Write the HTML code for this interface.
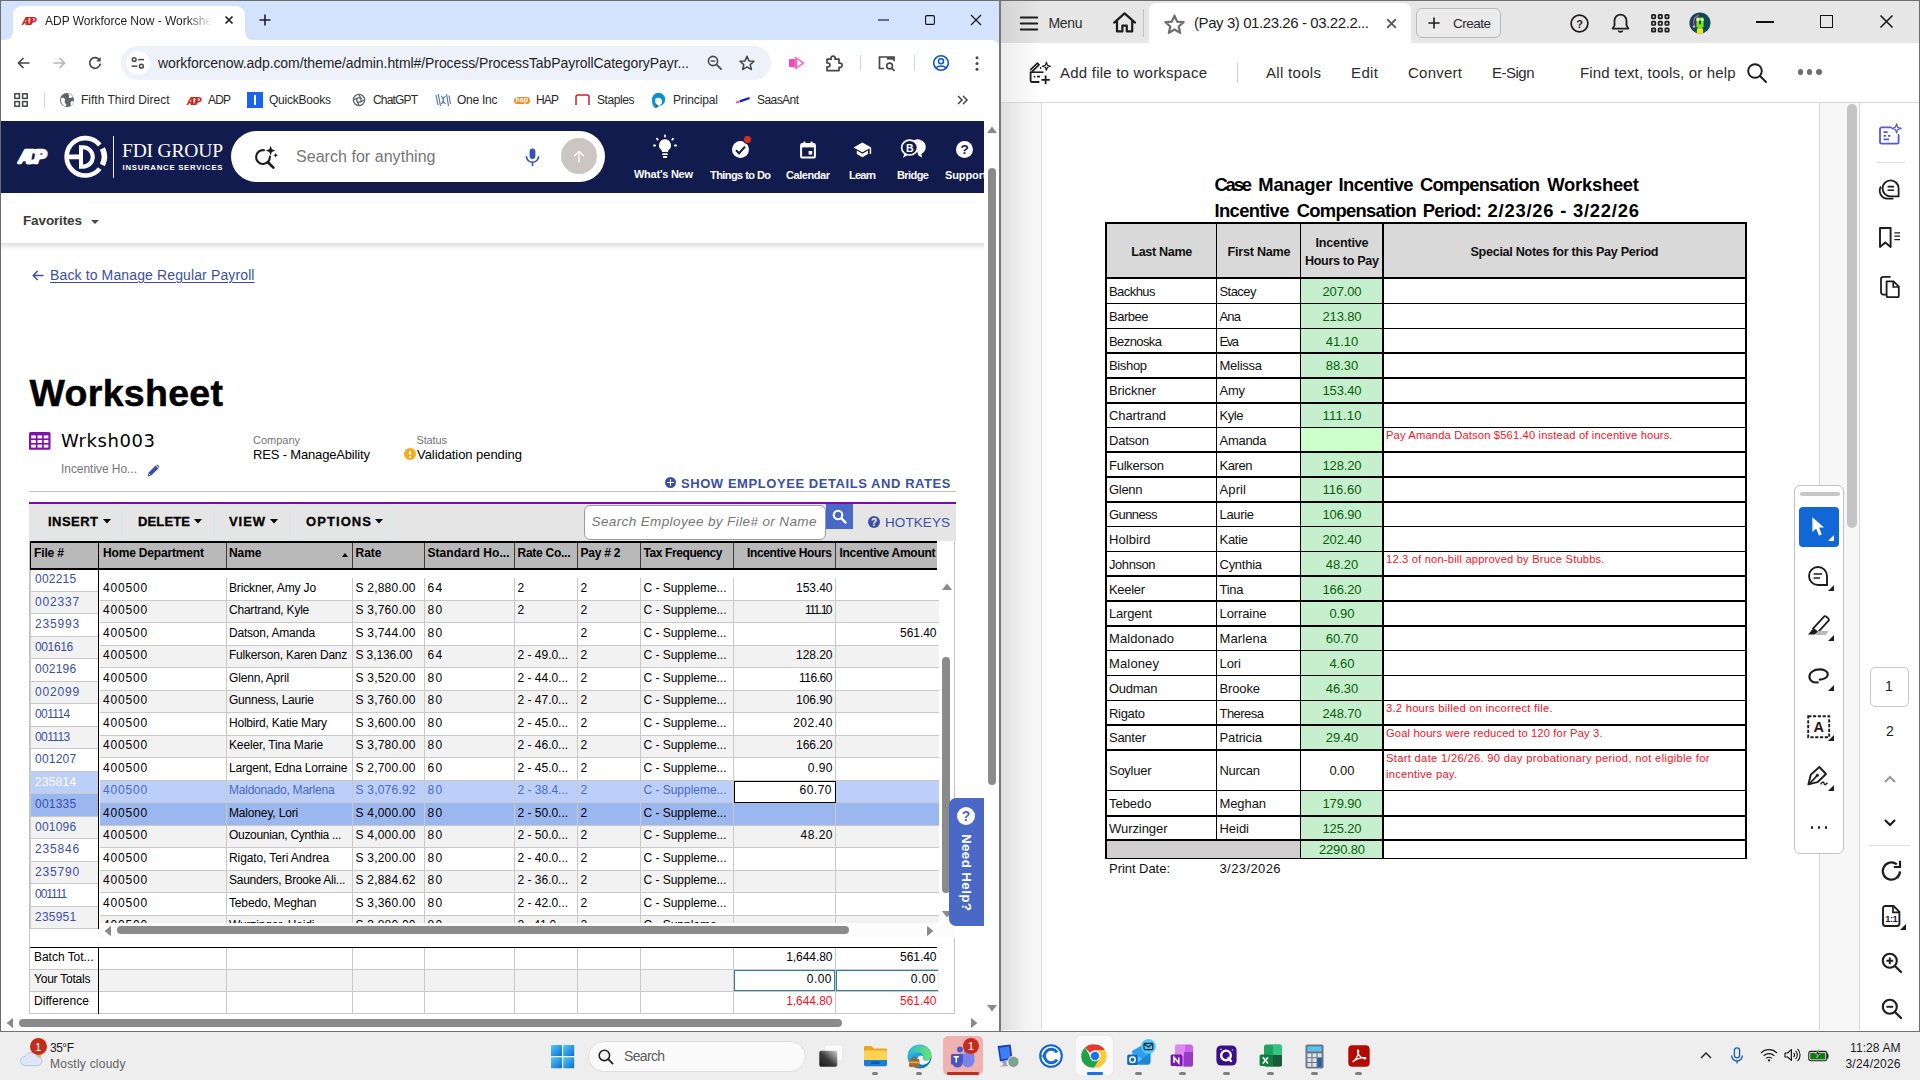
<!DOCTYPE html>
<html lang="en"><head><meta charset="utf-8"><title>ADP Workforce Now - Worksheet</title>
<style>
html,body{margin:0;padding:0;}
body{width:1920px;height:1080px;overflow:hidden;position:relative;background:#fff;font-family:"Liberation Sans",sans-serif;}
#root{position:absolute;left:0;top:0;width:1920px;height:1080px;overflow:hidden;}
#root div,#root svg,#root span.t{position:absolute;}
span.t{white-space:pre;}
svg{overflow:visible;}
</style></head>
<body><div id="root">
<!-- sec_chrome -->
<div style="left:1px;top:1px;width:998px;height:48px;background:#d3e3fd;"></div>
<div style="left:13px;top:6px;width:232px;height:34px;background:#fff;border-radius:9px 9px 0 0;"></div>
<svg style="left:5px;top:32px;" width="8" height="8" viewBox="0 0 8 8"><path d="M8 0V8H0A8 8 0 0 0 8 0Z" fill="#fff"/></svg>
<svg style="left:245px;top:32px;" width="8" height="8" viewBox="0 0 8 8"><path d="M0 0V8H8A8 8 0 0 1 0 0Z" fill="#fff"/></svg>
<div style="left:1px;top:40px;width:998px;height:81px;background:#fff;border-radius:0 7px 0 0;"></div>
<svg style="left:21px;top:15.6px;" width="16.5" height="9.2" viewBox="0 0 16.5 9.2"><text x="0.83" y="8.56" textLength="14.85" lengthAdjust="spacing" font-family="Liberation Sans, sans-serif" font-weight="700" font-style="italic" font-size="11.05" fill="#d0271d" stroke="#d0271d" stroke-width="0.18" stroke-linejoin="round">ADP</text></svg>
<span class="t" style="top:15.00px;font-size:12px;line-height:12px;color:#1f1f1f;letter-spacing:-0.015px;left:45.00px;-webkit-mask-image:linear-gradient(90deg,#000 85%,transparent 100%);mask-image:linear-gradient(90deg,#000 85%,transparent 100%);">ADP Workforce Now - Workshe</span>
<svg style="left:224px;top:15px;" width="10" height="10" viewBox="0 0 10 10"><path d="M1.5 1.5L8.5 8.5M8.5 1.5L1.5 8.5" stroke="#1f1f1f" stroke-width="1.7" fill="none"/></svg>
<svg style="left:259px;top:14px;" width="12" height="12" viewBox="0 0 12 12"><path d="M6 0.5V11.5M0.5 6H11.5" stroke="#1f1f1f" stroke-width="1.6" fill="none"/></svg>
<svg style="left:878px;top:14px;" width="12" height="12" viewBox="0 0 12 12"><path d="M0 6H11" stroke="#111" stroke-width="1.1"/></svg>
<svg style="left:925px;top:15px;" width="10" height="10" viewBox="0 0 10 10"><rect x="0.6" y="0.6" width="8.8" height="8.8" rx="1.2" fill="none" stroke="#111" stroke-width="1.1"/></svg>
<svg style="left:971px;top:15px;" width="10" height="10" viewBox="0 0 10 10"><path d="M0 0L10 10M10 0L0 10" stroke="#111" stroke-width="1.1"/></svg>
<svg style="left:17px;top:57px;" width="13" height="12" viewBox="0 0 13 12"><path d="M12.5 6H1.5M6.5 1L1.5 6L6.5 11" stroke="#444746" stroke-width="1.7" fill="none"/></svg>
<svg style="left:53px;top:57px;" width="13" height="12" viewBox="0 0 13 12"><path d="M0.5 6H11.5M6.5 1L11.5 6L6.5 11" stroke="#b4b7bb" stroke-width="1.7" fill="none"/></svg>
<svg style="left:88px;top:56px;" width="14" height="14" viewBox="0 0 14 14"><path d="M11.6 4.2A5.3 5.3 0 1 0 12.3 7.6" stroke="#444746" stroke-width="1.7" fill="none"/><path d="M12.6 1V5.4H8.2Z" fill="#444746"/></svg>
<div style="left:121px;top:46px;width:650px;height:34px;background:#edf1fa;border-radius:17px;"></div>
<div style="left:126px;top:51px;width:24px;height:24px;background:#fff;border-radius:12px;"></div>
<svg style="left:131px;top:57px;" width="14" height="12" viewBox="0 0 14 12"><circle cx="3.2" cy="2.6" r="1.9" fill="none" stroke="#444746" stroke-width="1.5"/><path d="M7.2 2.6H13" stroke="#444746" stroke-width="1.5"/><circle cx="10.4" cy="9.2" r="1.9" fill="none" stroke="#444746" stroke-width="1.5"/><path d="M0.6 9.2H6.4" stroke="#444746" stroke-width="1.5"/></svg>
<span class="t" style="top:56.00px;font-size:14px;line-height:14px;color:#1f1f1f;letter-spacing:-0.076px;left:158.00px;">workforcenow.adp.com/theme/admin.html#/Process/ProcessTabPayrollCategoryPayr...</span>
<svg style="left:707px;top:55px;" width="16" height="16" viewBox="0 0 16 16"><circle cx="6" cy="6" r="4.6" fill="none" stroke="#444746" stroke-width="1.6"/><path d="M9.4 9.4L14.6 14.6" stroke="#444746" stroke-width="1.8"/><path d="M3.8 6H8.2" stroke="#444746" stroke-width="1.4"/></svg>
<svg style="left:739px;top:55px;" width="16" height="16" viewBox="0 0 16 16"><path d="M8 1.3L10 5.9L15 6.3L11.2 9.6L12.4 14.5L8 11.9L3.6 14.5L4.8 9.6L1 6.3L6 5.9Z" fill="none" stroke="#444746" stroke-width="1.5" stroke-linejoin="round"/></svg>
<svg style="left:788px;top:56px;" width="18" height="14" viewBox="0 0 18 14"><rect x="1" y="3" width="8" height="8" fill="#f04bb5"/><path d="M7.5 1.5L15.5 7L7.5 12.5Z" fill="none" stroke="#f772c8" stroke-width="1.6" stroke-linejoin="round"/></svg>
<svg style="left:825px;top:54px;" width="18" height="18" viewBox="0 0 18 18"><path d="M2 5.2H6.1V4.1A2 2 0 0 1 10.1 4.1V5.2H14V9.2H15A2.1 2.1 0 0 1 15 13.4H14V16.6H2V12.8H3A1.9 1.9 0 0 0 3 9H2Z" fill="none" stroke="#444746" stroke-width="1.7" stroke-linejoin="round"/></svg>
<div style="left:859.5px;top:55px;width:1.5px;height:16px;background:#c7d6f5;"></div>
<svg style="left:878px;top:55px;" width="18" height="16" viewBox="0 0 18 16"><path d="M6 13.5H1.5V2H16V6" fill="none" stroke="#444746" stroke-width="1.7"/><path d="M9 2.2H16V4.6H9Z" fill="#444746"/><circle cx="11.6" cy="11" r="2.9" fill="none" stroke="#444746" stroke-width="1.6"/><path d="M13.8 13.2L16.6 16" stroke="#444746" stroke-width="1.7"/></svg>
<div style="left:913.5px;top:55px;width:1.5px;height:16px;background:#c7d6f5;"></div>
<svg style="left:932px;top:54px;" width="18" height="18" viewBox="0 0 18 18"><circle cx="9" cy="9" r="7.3" fill="none" stroke="#0b57d0" stroke-width="1.6"/><circle cx="9" cy="7.2" r="2.5" fill="none" stroke="#0b57d0" stroke-width="1.5"/><path d="M3.9 14A6.3 4.6 0 0 1 14.1 14" fill="none" stroke="#0b57d0" stroke-width="1.5"/></svg>
<svg style="left:975px;top:56px;" width="4" height="16" viewBox="0 0 4 16"><circle cx="2" cy="1.8" r="1.5" fill="#444746"/><circle cx="2" cy="7.5" r="1.5" fill="#444746"/><circle cx="2" cy="13.2" r="1.5" fill="#444746"/></svg>
<svg style="left:14px;top:93px;" width="14" height="14" viewBox="0 0 14 14"><g fill="none" stroke="#444746" stroke-width="1.5"><rect x="0.8" y="0.8" width="4.6" height="4.6"/><rect x="8.6" y="0.8" width="4.6" height="4.6"/><rect x="0.8" y="8.6" width="4.6" height="4.6"/><rect x="8.6" y="8.6" width="4.6" height="4.6"/></g></svg>
<div style="left:43.5px;top:92px;width:1.5px;height:16px;background:#c7d6f5;"></div>
<svg style="left:60px;top:93px;" width="14" height="14" viewBox="0 0 14 14"><circle cx="7" cy="7" r="7" fill="#5f6368"/><path d="M1.2 5.2C3 4.4 4.5 5 5 6.5C5.3 7.8 4.3 8.2 4.8 9.4C5.3 10.6 6.6 10.4 6.4 12C6.3 12.8 5.6 13.3 5 13.4A7 7 0 0 1 1.2 5.2ZM7.5 0.4C9 1.4 9.6 2.4 9 3.4C8.5 4.3 9.6 5 10.4 5C11.5 5 12 4 13 4A7 7 0 0 0 7.5 0.4ZM13.7 8.4C12.6 7.9 11.3 8 10.8 9C10.3 10 11 11 10.4 12.4C12 11.8 13.3 10.4 13.7 8.4Z" fill="#fff"/></svg>
<span class="t" style="top:94.00px;font-size:12px;line-height:12px;color:#2a2a2a;letter-spacing:0.002px;left:81.00px;">Fifth Third Direct</span>
<svg style="left:186px;top:95.6px;" width="16.5" height="9.2" viewBox="0 0 16.5 9.2"><text x="0.83" y="8.56" textLength="14.85" lengthAdjust="spacing" font-family="Liberation Sans, sans-serif" font-weight="700" font-style="italic" font-size="11.05" fill="#d0271d" stroke="#d0271d" stroke-width="0.18" stroke-linejoin="round">ADP</text></svg>
<span class="t" style="top:94.00px;font-size:12px;line-height:12px;color:#2a2a2a;letter-spacing:-0.844px;left:208.00px;">ADP</span>
<div style="left:247px;top:92px;width:16px;height:16px;background:#1a63ef;"></div>
<div style="left:253.6px;top:95px;width:2.8px;height:10px;background:#fff;"></div>
<span class="t" style="top:94.00px;font-size:12px;line-height:12px;color:#2a2a2a;letter-spacing:-0.226px;left:269.00px;">QuickBooks</span>
<svg style="left:352px;top:93px;" width="14" height="14" viewBox="0 0 14 14"><g fill="none" stroke="#5f6368" stroke-width="1.3"><circle cx="7" cy="7" r="5.6"/><circle cx="7" cy="7" r="2.3"/><path d="M7 1.4L9 5.8M12.6 7L8.4 9M7 12.6L5 8.2M1.4 7L5.6 5"/></g></svg>
<span class="t" style="top:94.00px;font-size:12px;line-height:12px;color:#2a2a2a;letter-spacing:-0.836px;left:373.00px;">ChatGPT</span>
<svg style="left:435px;top:93px;" width="16" height="14" viewBox="0 0 16 14"><g fill="none" stroke="#5a7fae" stroke-width="1.2"><path d="M1 2L3 12M3.2 1L5.5 13M6 3C9 5 9 9 6 11M10.5 3C7.5 5 7.5 9 10.5 11M11.5 1L13.5 13M14 2.5L15.5 11"/></g></svg>
<span class="t" style="top:94.00px;font-size:12px;line-height:12px;color:#2a2a2a;letter-spacing:-0.255px;left:457.00px;">One Inc</span>
<div style="left:514px;top:96.5px;width:16px;height:7.5px;background:#f28c28;border-radius:4px;"></div>
<span class="t" style="top:97.00px;font-size:6.5px;line-height:6.5px;color:#fff;font-weight:700;letter-spacing:0.469px;left:515.60px;">hap</span>
<span class="t" style="top:94.00px;font-size:12px;line-height:12px;color:#2a2a2a;letter-spacing:-0.844px;left:536.00px;">HAP</span>
<svg style="left:575px;top:94px;" width="16" height="12" viewBox="0 0 16 12"><path d="M1 11V2.6A1.6 1.6 0 0 1 2.6 1H12.4A1.6 1.6 0 0 1 14 2.6V11" fill="none" stroke="#cc1f2d" stroke-width="1.5"/></svg>
<span class="t" style="top:94.00px;font-size:12px;line-height:12px;color:#2a2a2a;letter-spacing:-0.422px;left:597.00px;">Staples</span>
<svg style="left:651px;top:92px;" width="15" height="17" viewBox="0 0 15 17"><path d="M7.6 0.8A6.6 6.6 0 0 1 14.2 7.4C14.2 11 11.4 13.6 8.4 13.8A4.2 4.2 0 0 0 11 9.8A4 4 0 0 0 7 5.8A4 4 0 0 0 4.2 7V16.2C2 14.6 0.9 11.4 0.9 7.6A6.7 6.7 0 0 1 7.6 0.8Z" fill="#0a91d4"/><path d="M4.2 10V16.2C5.6 15.8 7.4 14.6 8.4 13.8C6.2 13.6 4.6 12 4.2 10Z" fill="#035f9e"/></svg>
<span class="t" style="top:94.00px;font-size:12px;line-height:12px;color:#2a2a2a;letter-spacing:-0.129px;left:673.00px;">Principal</span>
<svg style="left:735px;top:96px;" width="16" height="8" viewBox="0 0 16 8"><path d="M1 6.6L4.5 5.6" stroke="#ee3fb8" stroke-width="1.8"/><path d="M4.8 5.4L14.6 2" stroke="#1a1fb8" stroke-width="2.2"/></svg>
<span class="t" style="top:94.00px;font-size:12px;line-height:12px;color:#2a2a2a;letter-spacing:-0.562px;left:757.00px;">SaasAnt</span>
<svg style="left:957px;top:95px;" width="11" height="10" viewBox="0 0 11 10"><path d="M1 1L5 5L1 9M6 1L10 5L6 9" fill="none" stroke="#444746" stroke-width="1.5"/></svg>
<!-- sec_adp -->
<div style="left:1px;top:121px;width:983px;height:72px;background:#121b4d;"></div>
<svg style="left:17px;top:148.6px;" width="31" height="15.2" viewBox="0 0 31 15.2"><text x="1.55" y="14.14" textLength="27.90" lengthAdjust="spacing" font-family="Liberation Sans, sans-serif" font-weight="700" font-style="italic" font-size="18.26" fill="#fff" stroke="#fff" stroke-width="2.28" stroke-linejoin="round">ADP</text></svg>
<svg style="left:64px;top:135px;" width="44" height="44" viewBox="0 0 44 44"><path d="M35.8 10A18.7 18.7 0 1 0 35.8 33.6" fill="none" stroke="#fff" stroke-width="4.6"/><path d="M38.4 13.6A18.4 18.4 0 0 1 38.4 30" fill="none" stroke="#fff" stroke-width="5.6"/><path d="M15 10.2H19A11.8 11.75 0 0 1 19 33.7H15V24.2H3.5V19.6H15Z M19 14.3V29.6A7.7 7.65 0 0 0 19 14.3Z" fill="#fff" fill-rule="evenodd"/></svg>
<div style="left:113px;top:136px;width:1.2px;height:42px;background:#e8e8ef;"></div>
<span class="t" style="top:141.00px;font-size:19.5px;line-height:19.5px;color:#fff;font-family:'Liberation Serif', serif;letter-spacing:-0.176px;left:122.00px;">FDI GROUP</span>
<span class="t" style="top:164.00px;font-size:7.8px;line-height:7.8px;color:#fff;font-weight:700;letter-spacing:0.717px;left:122.50px;">INSURANCE SERVICES</span>
<div style="left:231px;top:131px;width:374px;height:51px;background:#fff;border-radius:25.5px;"></div>
<svg style="left:255px;top:145px;" width="26" height="26" viewBox="0 0 26 26"><path d="M14.9 11.6A6.9 6.9 0 1 1 9 5.2" fill="none" stroke="#1c1c1c" stroke-width="2.1" stroke-linecap="round"/><path d="M13 17.2L18.4 22.6" stroke="#1c1c1c" stroke-width="2.7" stroke-linecap="round"/><path d="M15.6 0.8L16.9 4.3L20.4 5.6L16.9 6.9L15.6 10.4L14.3 6.9L10.8 5.6L14.3 4.3Z" fill="#1c1c1c"/><path d="M20.7 7.9L21.4 9.6L23.1 10.3L21.4 11L20.7 12.7L20 11L18.3 10.3L20 9.6Z" fill="#1c1c1c"/></svg>
<span class="t" style="top:149.00px;font-size:16px;line-height:16px;color:#767676;letter-spacing:0.042px;left:296.00px;">Search for anything</span>
<svg style="left:525px;top:148px;" width="16" height="19" viewBox="0 0 16 19"><rect x="4.6" y="0.6" width="5.8" height="10.4" rx="2.9" fill="#3553b5"/><path d="M1.4 8.2A6.1 6.1 0 0 0 13.6 8.2" fill="none" stroke="#3553b5" stroke-width="1.6"/><path d="M7.5 14.2V18" stroke="#3553b5" stroke-width="1.6"/></svg>
<div style="left:561px;top:138px;width:36px;height:36px;background:#cbc6c1;border-radius:18px;"></div>
<svg style="left:573px;top:150px;" width="12" height="13" viewBox="0 0 12 13"><path d="M6 12.5V1.5M1 6.3L6 1.3L11 6.3" fill="none" stroke="#fff" stroke-width="1.3"/></svg>
<svg style="left:652px;top:134px;" width="26" height="26" viewBox="0 0 26 26"><path d="M13 5.2A6 6 0 0 0 9.2 15.8C9.8 16.4 10 17 10 18H16C16 17 16.2 16.4 16.8 15.8A6 6 0 0 0 13 5.2Z" fill="#fff"/><rect x="10.2" y="19.2" width="5.6" height="1.9" rx="0.9" fill="#fff"/><rect x="10.8" y="22" width="4.4" height="1.9" rx="0.9" fill="#fff"/><g fill="#fff"><rect x="12.1" y="0.4" width="1.8" height="3" rx="0.9"/><rect x="4.4" y="3.6" width="1.8" height="3" rx="0.9" transform="rotate(-45 5.3 5.1)"/><rect x="19.8" y="3.6" width="1.8" height="3" rx="0.9" transform="rotate(45 20.7 5.1)"/><rect x="1" y="10.6" width="3" height="1.8" rx="0.9"/><rect x="22" y="10.6" width="3" height="1.8" rx="0.9"/></g></svg>
<span class="t" style="top:169.00px;font-size:11px;line-height:11px;color:#fff;font-weight:700;letter-spacing:-0.259px;left:363.37px;width:600px;text-align:center;">What’s New</span>
<div style="left:732px;top:141px;width:17px;height:17px;background:#fff;border-radius:9px;"></div>
<svg style="left:735px;top:144.5px;" width="11" height="10" viewBox="0 0 11 10"><path d="M1 5.2L4.1 8.2L10 1.6" fill="none" stroke="#121b4d" stroke-width="2"/></svg>
<div style="left:744px;top:135.5px;width:7px;height:7px;background:#d2341f;border-radius:4px;border:1px solid #121b4d;box-sizing:content-box;margin:-1px;"></div>
<span class="t" style="top:170.00px;font-size:11px;line-height:11px;color:#fff;font-weight:700;letter-spacing:-0.565px;left:440.22px;width:600px;text-align:center;">Things to Do</span>
<svg style="left:800px;top:141px;" width="16" height="18" viewBox="0 0 16 18"><rect x="1.1" y="3" width="13.8" height="13.6" rx="1.2" fill="none" stroke="#fff" stroke-width="2"/><rect x="1.1" y="3" width="13.8" height="3.4" fill="#fff"/><rect x="3.4" y="0.6" width="2" height="4" fill="#fff"/><rect x="10.6" y="0.6" width="2" height="4" fill="#fff"/><rect x="8.6" y="10" width="3.6" height="3.6" fill="#fff"/></svg>
<span class="t" style="top:170.00px;font-size:11px;line-height:11px;color:#fff;font-weight:700;letter-spacing:-0.440px;left:507.78px;width:600px;text-align:center;">Calendar</span>
<svg style="left:853px;top:142px;" width="20" height="16" viewBox="0 0 20 16"><path d="M9.4 0.6L0.6 5.4L9.4 10.2L18.2 5.4Z" fill="#fff"/><path d="M3.8 8.6V12L9.4 15.2L15 12V8.6L9.4 11.8Z" fill="#fff"/><path d="M17.4 6V12" stroke="#fff" stroke-width="1.5"/></svg>
<span class="t" style="top:170.00px;font-size:11px;line-height:11px;color:#fff;font-weight:700;letter-spacing:-0.742px;left:562.13px;width:600px;text-align:center;">Learn</span>
<svg style="left:900px;top:139px;" width="26" height="20" viewBox="0 0 26 20"><path d="M14 1.2A8 7.6 0 0 1 21.4 15L22 18.6L18.4 16.4" fill="#fff"/><ellipse cx="9.6" cy="8.6" rx="8" ry="7.4" fill="#121b4d" stroke="#fff" stroke-width="1.7"/><path d="M4.4 14.4L3 18.8L8 15.8Z" fill="#fff"/><text x="9.7" y="12.6" text-anchor="middle" font-family="Liberation Sans, sans-serif" font-weight="700" font-size="10.5" fill="#fff">B</text></svg>
<span class="t" style="top:170.00px;font-size:11px;line-height:11px;color:#fff;font-weight:700;letter-spacing:-0.569px;left:612.72px;width:600px;text-align:center;">Bridge</span>
<div style="left:956px;top:141px;width:17px;height:17px;background:#fff;border-radius:9px;"></div>
<span class="t" style="top:143.00px;font-size:13.5px;line-height:13.5px;color:#121b4d;font-weight:700;left:664.50px;width:600px;text-align:center;">?</span>
<div style="left:940px;top:160px;width:44px;height:26px;overflow:hidden;"><span class="t" style="top:10.00px;font-size:11px;line-height:11px;color:#fff;font-weight:700;letter-spacing:-0.112px;left:5.00px;">Support</span></div>
<div style="left:1px;top:243px;width:983px;height:8px;background:linear-gradient(180deg,rgba(0,0,0,0.13),rgba(0,0,0,0.03) 60%,rgba(0,0,0,0));"></div>
<span class="t" style="top:214.00px;font-size:13.5px;line-height:13.5px;color:#3a3a3a;font-weight:700;letter-spacing:-0.129px;left:23.00px;">Favorites</span>
<svg style="left:91px;top:219.5px;" width="8" height="4" viewBox="0 0 8 4"><path d="M0 0H8L4 4Z" fill="#4a4a4a"/></svg>
<div style="left:984px;top:121px;width:15px;height:909px;background:#fff;"></div>
<svg style="left:986.5px;top:125.5px;" width="10" height="7" viewBox="0 0 10 7"><path d="M0.3 6.4L5 0.6L9.7 6.4Q9.9 7 9.2 7H0.8Q0.1 7 0.3 6.4Z" fill="#8a8a8a"/></svg>
<div style="left:987.5px;top:168px;width:8px;height:617px;background:#8b8b8b;border-radius:4px;"></div>
<svg style="left:986.5px;top:1005px;" width="10" height="7" viewBox="0 0 10 7"><path d="M0.3 0.6L5 6.4L9.7 0.6Q9.9 0 9.2 0H0.8Q0.1 0 0.3 0.6Z" fill="#8a8a8a"/></svg>
<svg style="left:32px;top:270px;" width="12" height="11" viewBox="0 0 12 11"><path d="M11.5 5.5H1.2M5.6 1L1.2 5.5L5.6 10" fill="none" stroke="#3a4fa5" stroke-width="1.5"/></svg>
<span class="t" style="top:268.00px;font-size:14px;line-height:14px;color:#3a4fa5;letter-spacing:0.128px;left:50.00px;text-decoration:underline;text-underline-offset:2px;text-decoration-thickness:1px;">Back to Manage Regular Payroll</span>
<span class="t" style="top:375.00px;font-size:37.5px;line-height:37.5px;color:#000;font-weight:700;letter-spacing:0.307px;left:29.50px;-webkit-text-stroke:0.5px #000;">Worksheet</span>
<svg style="left:29px;top:432px;" width="22" height="18" viewBox="0 0 22 18"><rect x="0" y="0" width="21.5" height="17.8" rx="1.6" fill="#8212a6"/><g fill="#fff"><rect x="2.2" y="3.4" width="4.6" height="3"/><rect x="8.5" y="3.4" width="4.6" height="3"/><rect x="14.8" y="3.4" width="4.6" height="3"/><rect x="2.2" y="8" width="4.6" height="3"/><rect x="8.5" y="8" width="4.6" height="3"/><rect x="14.8" y="8" width="4.6" height="3"/><rect x="2.2" y="12.6" width="4.6" height="3"/><rect x="8.5" y="12.6" width="4.6" height="3"/><rect x="14.8" y="12.6" width="4.6" height="3"/></g></svg>
<span class="t" style="top:432.00px;font-size:18px;line-height:18px;color:#000;font-family:'DejaVu Sans', sans-serif;letter-spacing:0.576px;left:61.00px;">Wrksh003</span>
<span class="t" style="top:463.00px;font-size:12px;line-height:12px;color:#767676;letter-spacing:-0.051px;left:61.00px;">Incentive Ho...</span>
<svg style="left:146.5px;top:463.5px;" width="13" height="13" viewBox="0 0 13 13"><path d="M0.6 12.4L1.4 8.8L8.6 1.6L11.4 4.4L4.2 11.6Z" fill="#3a4fa5"/><path d="M9.4 0.9A1 1 0 0 1 10.8 0.9L12.1 2.2A1 1 0 0 1 12.1 3.6L11.9 3.8L9.2 1.1Z" fill="#3a4fa5"/><path d="M1.7 9.6L3.4 11.3" stroke="#fff" stroke-width="0.8"/></svg>
<span class="t" style="top:435.00px;font-size:11px;line-height:11px;color:#767676;letter-spacing:-0.013px;left:253.00px;">Company</span>
<span class="t" style="top:448.00px;font-size:13px;line-height:13px;color:#000;letter-spacing:-0.164px;left:253.00px;">RES - ManageAbility</span>
<span class="t" style="top:435.00px;font-size:11px;line-height:11px;color:#767676;letter-spacing:-0.138px;left:416.50px;">Status</span>
<div style="left:403.9px;top:448.2px;width:12px;height:12px;background:#f9ab1a;border-radius:6px;"></div>
<div style="left:409px;top:450.6px;width:1.8px;height:4.8px;background:#fff;"></div>
<div style="left:409px;top:456.4px;width:1.8px;height:1.8px;background:#fff;"></div>
<span class="t" style="top:448.00px;font-size:13px;line-height:13px;color:#000;letter-spacing:-0.060px;left:417.00px;">Validation pending</span>
<div style="left:665px;top:477px;width:11px;height:11px;background:#3a4fa5;border-radius:6px;"></div>
<div style="left:667.4px;top:481.7px;width:6.2px;height:1.6px;background:#fff;"></div>
<div style="left:669.7px;top:479.4px;width:1.6px;height:6.2px;background:#fff;"></div>
<span class="t" style="top:477.00px;font-size:13px;line-height:13px;color:#3a4fa5;font-weight:700;letter-spacing:0.565px;left:681.00px;">SHOW EMPLOYEE DETAILS AND RATES</span>
<!-- sec_grid -->
<div style="left:29px;top:491px;width:927px;height:1px;background:#c4c4c4;"></div>
<div style="left:29px;top:504px;width:927px;height:37px;background:#e5e5e5;"></div>
<div style="left:29px;top:502px;width:927px;height:2.4px;background:#7c0ca6;"></div>
<div style="left:33px;top:505px;width:89px;height:35px;background:transparent;border:1px solid #dbe6ea;box-sizing:border-box;"></div>
<div style="left:122px;top:505px;width:92px;height:35px;background:transparent;border:1px solid #dbe6ea;box-sizing:border-box;"></div>
<div style="left:214px;top:505px;width:76px;height:35px;background:transparent;border:1px solid #dbe6ea;box-sizing:border-box;"></div>
<div style="left:290px;top:505px;width:104px;height:35px;background:transparent;border:1px solid #dbe6ea;box-sizing:border-box;"></div>
<span class="t" style="top:515.00px;font-size:13px;line-height:13px;color:#000;font-weight:700;letter-spacing:0.466px;left:48.00px;-webkit-text-stroke:0.3px #000;">INSERT</span>
<svg style="left:103px;top:518.5px;" width="8" height="4.5" viewBox="0 0 8 4.5"><path d="M0 0H8L4 4.5Z" fill="#000"/></svg>
<span class="t" style="top:515.00px;font-size:13px;line-height:13px;color:#000;font-weight:700;letter-spacing:0.141px;left:138.00px;-webkit-text-stroke:0.3px #000;">DELETE</span>
<svg style="left:194px;top:518.5px;" width="8" height="4.5" viewBox="0 0 8 4.5"><path d="M0 0H8L4 4.5Z" fill="#000"/></svg>
<span class="t" style="top:515.00px;font-size:13px;line-height:13px;color:#000;font-weight:700;letter-spacing:0.922px;left:229.00px;-webkit-text-stroke:0.3px #000;">VIEW</span>
<svg style="left:270px;top:518.5px;" width="8" height="4.5" viewBox="0 0 8 4.5"><path d="M0 0H8L4 4.5Z" fill="#000"/></svg>
<span class="t" style="top:515.00px;font-size:13px;line-height:13px;color:#000;font-weight:700;letter-spacing:1.081px;left:306.00px;-webkit-text-stroke:0.3px #000;">OPTIONS</span>
<svg style="left:375px;top:518.5px;" width="8" height="4.5" viewBox="0 0 8 4.5"><path d="M0 0H8L4 4.5Z" fill="#000"/></svg>
<div style="left:583.5px;top:505px;width:242.5px;height:34.5px;background:#fff;border:1px solid #9a9a9a;border-radius:6px;box-sizing:border-box;"></div>
<span class="t" style="top:515.00px;font-size:13.5px;line-height:13.5px;color:#767676;font-style:italic;letter-spacing:0.384px;left:591.50px;">Search Employee by File# or Name</span>
<div style="left:826px;top:504px;width:27px;height:25px;background:#4a69c6;"></div>
<svg style="left:832px;top:509px;" width="15" height="15" viewBox="0 0 15 15"><circle cx="6" cy="6" r="4.3" fill="none" stroke="#fff" stroke-width="2.1"/><path d="M9.2 9.2L13.6 13.6" stroke="#fff" stroke-width="2.4" stroke-linecap="round"/></svg>
<div style="left:868px;top:516px;width:12px;height:12px;background:#3a4fa5;border-radius:6px;"></div>
<span class="t" style="top:518.00px;font-size:10px;line-height:10px;color:#fff;font-weight:700;left:574.00px;width:600px;text-align:center;">?</span>
<span class="t" style="top:516.00px;font-size:13.5px;line-height:13.5px;color:#3a4fa5;letter-spacing:0.081px;left:885.00px;">HOTKEYS</span>
<div style="left:29px;top:541px;width:926px;height:472.5px;background:#fff;border-left:1px solid #c4c4c4;border-right:1px solid #c4c4c4;border-bottom:1px solid #c4c4c4;box-sizing:border-box;"></div>
<div style="left:30px;top:541.4px;width:907px;height:28.4px;background:#000;"></div>
<div style="left:31px;top:542.6px;width:67px;height:25.7px;background:#b9b9b9;"></div>
<div style="left:99.4px;top:542.6px;width:837.6px;height:25.7px;background:#b9b9b9;"></div>
<div style="left:226.0px;top:542.6px;width:1px;height:25.7px;background:#3a3a3a;"></div>
<div style="left:352.0px;top:542.6px;width:1px;height:25.7px;background:#3a3a3a;"></div>
<div style="left:424.0px;top:542.6px;width:1px;height:25.7px;background:#3a3a3a;"></div>
<div style="left:514.0px;top:542.6px;width:1px;height:25.7px;background:#3a3a3a;"></div>
<div style="left:577.0px;top:542.6px;width:1px;height:25.7px;background:#3a3a3a;"></div>
<div style="left:640.0px;top:542.6px;width:1px;height:25.7px;background:#3a3a3a;"></div>
<div style="left:733.0px;top:542.6px;width:1px;height:25.7px;background:#3a3a3a;"></div>
<div style="left:835.0px;top:542.6px;width:1px;height:25.7px;background:#3a3a3a;"></div>
<span class="t" style="top:547.00px;font-size:12px;line-height:12px;color:#000;font-weight:700;letter-spacing:-0.138px;left:34.00px;">File #</span>
<span class="t" style="top:547.00px;font-size:12px;line-height:12px;color:#000;font-weight:700;letter-spacing:-0.169px;left:103.00px;">Home Department</span>
<span class="t" style="top:547.00px;font-size:12px;line-height:12px;color:#000;font-weight:700;letter-spacing:-0.062px;left:229.00px;">Name</span>
<span class="t" style="top:547.00px;font-size:12px;line-height:12px;color:#000;font-weight:700;letter-spacing:-0.005px;left:355.50px;">Rate</span>
<span class="t" style="top:547.00px;font-size:12px;line-height:12px;color:#000;font-weight:700;letter-spacing:0.050px;left:427.50px;">Standard Ho...</span>
<span class="t" style="top:547.00px;font-size:12px;line-height:12px;color:#000;font-weight:700;letter-spacing:-0.260px;left:517.50px;">Rate Co...</span>
<span class="t" style="top:547.00px;font-size:12px;line-height:12px;color:#000;font-weight:700;letter-spacing:-0.229px;left:580.50px;">Pay # 2</span>
<span class="t" style="top:547.00px;font-size:12px;line-height:12px;color:#000;font-weight:700;letter-spacing:-0.401px;left:643.50px;">Tax Frequency</span>
<span class="t" style="top:547.00px;font-size:12px;line-height:12px;color:#000;font-weight:700;letter-spacing:-0.359px;right:1088.36px;">Incentive Hours</span>
<span class="t" style="top:547.00px;font-size:12px;line-height:12px;color:#000;font-weight:700;letter-spacing:-0.282px;left:839.50px;">Incentive Amount</span>
<svg style="left:342px;top:552.5px;" width="6" height="4" viewBox="0 0 6 4"><path d="M0 4H6L3 0Z" fill="#000"/></svg>
<div style="left:0;top:0;width:1920px;height:1080px;clip-path:inset(570px 1821.5px 151px 30px);">
<div style="left:30px;top:569.0px;width:68.5px;height:22.5px;background:#fff;border-bottom:1px solid #c9c9c9;box-sizing:border-box;"></div>
<span class="t" style="top:573.00px;font-size:12px;line-height:12px;color:#3a4fa5;letter-spacing:0.221px;left:35.00px;">002215</span>
<div style="left:30px;top:591.5px;width:68.5px;height:22.5px;background:#f2f2f2;border-bottom:1px solid #c9c9c9;box-sizing:border-box;"></div>
<span class="t" style="top:596.00px;font-size:12px;line-height:12px;color:#3a4fa5;letter-spacing:0.811px;left:35.00px;">002337</span>
<div style="left:30px;top:614.0px;width:68.5px;height:22.5px;background:#fff;border-bottom:1px solid #c9c9c9;box-sizing:border-box;"></div>
<span class="t" style="top:618.00px;font-size:12px;line-height:12px;color:#3a4fa5;letter-spacing:0.811px;left:35.00px;">235993</span>
<div style="left:30px;top:636.5px;width:68.5px;height:22.5px;background:#f2f2f2;border-bottom:1px solid #c9c9c9;box-sizing:border-box;"></div>
<span class="t" style="top:641.00px;font-size:12px;line-height:12px;color:#3a4fa5;letter-spacing:-0.369px;left:35.00px;">001616</span>
<div style="left:30px;top:659.0px;width:68.5px;height:22.5px;background:#fff;border-bottom:1px solid #c9c9c9;box-sizing:border-box;"></div>
<span class="t" style="top:663.00px;font-size:12px;line-height:12px;color:#3a4fa5;letter-spacing:0.221px;left:35.00px;">002196</span>
<div style="left:30px;top:681.5px;width:68.5px;height:22.5px;background:#f2f2f2;border-bottom:1px solid #c9c9c9;box-sizing:border-box;"></div>
<span class="t" style="top:686.00px;font-size:12px;line-height:12px;color:#3a4fa5;letter-spacing:0.811px;left:35.00px;">002099</span>
<div style="left:30px;top:704.0px;width:68.5px;height:22.5px;background:#fff;border-bottom:1px solid #c9c9c9;box-sizing:border-box;"></div>
<span class="t" style="top:708.00px;font-size:12px;line-height:12px;color:#3a4fa5;letter-spacing:-0.603px;left:35.00px;">001114</span>
<div style="left:30px;top:726.5px;width:68.5px;height:22.5px;background:#f2f2f2;border-bottom:1px solid #c9c9c9;box-sizing:border-box;"></div>
<span class="t" style="top:731.00px;font-size:12px;line-height:12px;color:#3a4fa5;letter-spacing:-0.603px;left:35.00px;">001113</span>
<div style="left:30px;top:749.0px;width:68.5px;height:22.5px;background:#fff;border-bottom:1px solid #c9c9c9;box-sizing:border-box;"></div>
<span class="t" style="top:753.00px;font-size:12px;line-height:12px;color:#3a4fa5;letter-spacing:0.221px;left:35.00px;">001207</span>
<div style="left:30px;top:771.5px;width:68.5px;height:22.5px;background:#bccff8;border-bottom:1px solid #c9c9c9;box-sizing:border-box;"></div>
<span class="t" style="top:776.00px;font-size:12px;line-height:12px;color:#fff;letter-spacing:0.221px;left:35.00px;">235814</span>
<div style="left:30px;top:794.0px;width:68.5px;height:22.5px;background:#9bb7ef;border-bottom:1px solid #c9c9c9;box-sizing:border-box;"></div>
<span class="t" style="top:798.00px;font-size:12px;line-height:12px;color:#3a4fa5;letter-spacing:0.221px;left:35.00px;">001335</span>
<div style="left:30px;top:816.5px;width:68.5px;height:22.5px;background:#f2f2f2;border-bottom:1px solid #c9c9c9;box-sizing:border-box;"></div>
<span class="t" style="top:821.00px;font-size:12px;line-height:12px;color:#3a4fa5;letter-spacing:0.221px;left:35.00px;">001096</span>
<div style="left:30px;top:839.0px;width:68.5px;height:22.5px;background:#fff;border-bottom:1px solid #c9c9c9;box-sizing:border-box;"></div>
<span class="t" style="top:843.00px;font-size:12px;line-height:12px;color:#3a4fa5;letter-spacing:0.811px;left:35.00px;">235846</span>
<div style="left:30px;top:861.5px;width:68.5px;height:22.5px;background:#f2f2f2;border-bottom:1px solid #c9c9c9;box-sizing:border-box;"></div>
<span class="t" style="top:866.00px;font-size:12px;line-height:12px;color:#3a4fa5;letter-spacing:0.811px;left:35.00px;">235790</span>
<div style="left:30px;top:884.0px;width:68.5px;height:22.5px;background:#fff;border-bottom:1px solid #c9c9c9;box-sizing:border-box;"></div>
<span class="t" style="top:888.00px;font-size:12px;line-height:12px;color:#3a4fa5;letter-spacing:-1.015px;left:35.00px;">001111</span>
<div style="left:30px;top:906.5px;width:68.5px;height:22.5px;background:#f2f2f2;border-bottom:1px solid #c9c9c9;box-sizing:border-box;"></div>
<span class="t" style="top:911.00px;font-size:12px;line-height:12px;color:#3a4fa5;letter-spacing:0.221px;left:35.00px;">235951</span>
</div>
<div style="left:30px;top:928px;width:68.5px;height:1px;background:#c9c9c9;"></div>
<div style="left:97.9px;top:541.4px;width:1.5px;height:387.6px;background:#000;"></div>
<div style="left:30px;top:570px;width:1px;height:359px;background:#c9c9c9;"></div>
<div style="left:0;top:0;width:1920px;height:1080px;clip-path:inset(570px 981.0px 157px 99.5px);">
<div style="left:99.5px;top:578.2px;width:839.5px;height:22.5px;background:#fff;border-bottom:1px solid #c9c9c9;box-sizing:border-box;"></div>
<div style="left:226.0px;top:578.2px;width:1px;height:22.5px;background:#c9c9c9;"></div>
<div style="left:352.0px;top:578.2px;width:1px;height:22.5px;background:#c9c9c9;"></div>
<div style="left:424.0px;top:578.2px;width:1px;height:22.5px;background:#c9c9c9;"></div>
<div style="left:514.0px;top:578.2px;width:1px;height:22.5px;background:#c9c9c9;"></div>
<div style="left:577.0px;top:578.2px;width:1px;height:22.5px;background:#c9c9c9;"></div>
<div style="left:640.0px;top:578.2px;width:1px;height:22.5px;background:#c9c9c9;"></div>
<div style="left:733.0px;top:578.2px;width:1px;height:22.5px;background:#c9c9c9;"></div>
<div style="left:835.0px;top:578.2px;width:1px;height:22.5px;background:#c9c9c9;"></div>
<span class="t" style="top:582.00px;font-size:12px;line-height:12px;color:#000;letter-spacing:0.811px;left:103.00px;">400500</span>
<span class="t" style="top:582.00px;font-size:12px;line-height:12px;color:#000;letter-spacing:-0.154px;left:229.00px;">Brickner, Amy Jo</span>
<span class="t" style="top:582.00px;font-size:12px;line-height:12px;color:#000;letter-spacing:0.216px;left:355.50px;">S 2,880.00</span>
<span class="t" style="top:582.00px;font-size:12px;line-height:12px;color:#000;letter-spacing:1.341px;left:427.50px;">64</span>
<span class="t" style="top:582.00px;font-size:12px;line-height:12px;color:#000;left:517.50px;">2</span>
<span class="t" style="top:582.00px;font-size:12px;line-height:12px;color:#000;left:580.50px;">2</span>
<span class="t" style="top:582.00px;font-size:12px;line-height:12px;color:#000;letter-spacing:-0.027px;left:643.50px;">C - Suppleme...</span>
<span class="t" style="top:582.00px;font-size:12px;line-height:12px;color:#000;letter-spacing:-0.061px;right:1087.56px;">153.40</span>
<div style="left:99.5px;top:600.7px;width:839.5px;height:22.5px;background:#f2f2f2;border-bottom:1px solid #c9c9c9;box-sizing:border-box;"></div>
<div style="left:226.0px;top:600.7px;width:1px;height:22.5px;background:#c9c9c9;"></div>
<div style="left:352.0px;top:600.7px;width:1px;height:22.5px;background:#c9c9c9;"></div>
<div style="left:424.0px;top:600.7px;width:1px;height:22.5px;background:#c9c9c9;"></div>
<div style="left:514.0px;top:600.7px;width:1px;height:22.5px;background:#c9c9c9;"></div>
<div style="left:577.0px;top:600.7px;width:1px;height:22.5px;background:#c9c9c9;"></div>
<div style="left:640.0px;top:600.7px;width:1px;height:22.5px;background:#c9c9c9;"></div>
<div style="left:733.0px;top:600.7px;width:1px;height:22.5px;background:#c9c9c9;"></div>
<div style="left:835.0px;top:600.7px;width:1px;height:22.5px;background:#c9c9c9;"></div>
<span class="t" style="top:604.00px;font-size:12px;line-height:12px;color:#000;letter-spacing:0.811px;left:103.00px;">400500</span>
<span class="t" style="top:604.00px;font-size:12px;line-height:12px;color:#000;letter-spacing:-0.221px;left:229.00px;">Chartrand, Kyle</span>
<span class="t" style="top:604.00px;font-size:12px;line-height:12px;color:#000;letter-spacing:0.216px;left:355.50px;">S 3,760.00</span>
<span class="t" style="top:604.00px;font-size:12px;line-height:12px;color:#000;letter-spacing:1.341px;left:427.50px;">80</span>
<span class="t" style="top:604.00px;font-size:12px;line-height:12px;color:#000;left:517.50px;">2</span>
<span class="t" style="top:604.00px;font-size:12px;line-height:12px;color:#000;left:580.50px;">2</span>
<span class="t" style="top:604.00px;font-size:12px;line-height:12px;color:#000;letter-spacing:-0.027px;left:643.50px;">C - Suppleme...</span>
<span class="t" style="top:604.00px;font-size:12px;line-height:12px;color:#000;letter-spacing:-1.474px;right:1088.97px;">111.10</span>
<div style="left:99.5px;top:623.2px;width:839.5px;height:22.5px;background:#fff;border-bottom:1px solid #c9c9c9;box-sizing:border-box;"></div>
<div style="left:226.0px;top:623.2px;width:1px;height:22.5px;background:#c9c9c9;"></div>
<div style="left:352.0px;top:623.2px;width:1px;height:22.5px;background:#c9c9c9;"></div>
<div style="left:424.0px;top:623.2px;width:1px;height:22.5px;background:#c9c9c9;"></div>
<div style="left:514.0px;top:623.2px;width:1px;height:22.5px;background:#c9c9c9;"></div>
<div style="left:577.0px;top:623.2px;width:1px;height:22.5px;background:#c9c9c9;"></div>
<div style="left:640.0px;top:623.2px;width:1px;height:22.5px;background:#c9c9c9;"></div>
<div style="left:733.0px;top:623.2px;width:1px;height:22.5px;background:#c9c9c9;"></div>
<div style="left:835.0px;top:623.2px;width:1px;height:22.5px;background:#c9c9c9;"></div>
<span class="t" style="top:627.00px;font-size:12px;line-height:12px;color:#000;letter-spacing:0.811px;left:103.00px;">400500</span>
<span class="t" style="top:627.00px;font-size:12px;line-height:12px;color:#000;letter-spacing:-0.200px;left:229.00px;">Datson, Amanda</span>
<span class="t" style="top:627.00px;font-size:12px;line-height:12px;color:#000;letter-spacing:0.216px;left:355.50px;">S 3,744.00</span>
<span class="t" style="top:627.00px;font-size:12px;line-height:12px;color:#000;letter-spacing:1.341px;left:427.50px;">80</span>
<span class="t" style="top:627.00px;font-size:12px;line-height:12px;color:#000;left:580.50px;">2</span>
<span class="t" style="top:627.00px;font-size:12px;line-height:12px;color:#000;letter-spacing:-0.027px;left:643.50px;">C - Suppleme...</span>
<span class="t" style="top:627.00px;font-size:12px;line-height:12px;color:#000;letter-spacing:-0.061px;right:983.56px;">561.40</span>
<div style="left:99.5px;top:645.7px;width:839.5px;height:22.5px;background:#f2f2f2;border-bottom:1px solid #c9c9c9;box-sizing:border-box;"></div>
<div style="left:226.0px;top:645.7px;width:1px;height:22.5px;background:#c9c9c9;"></div>
<div style="left:352.0px;top:645.7px;width:1px;height:22.5px;background:#c9c9c9;"></div>
<div style="left:424.0px;top:645.7px;width:1px;height:22.5px;background:#c9c9c9;"></div>
<div style="left:514.0px;top:645.7px;width:1px;height:22.5px;background:#c9c9c9;"></div>
<div style="left:577.0px;top:645.7px;width:1px;height:22.5px;background:#c9c9c9;"></div>
<div style="left:640.0px;top:645.7px;width:1px;height:22.5px;background:#c9c9c9;"></div>
<div style="left:733.0px;top:645.7px;width:1px;height:22.5px;background:#c9c9c9;"></div>
<div style="left:835.0px;top:645.7px;width:1px;height:22.5px;background:#c9c9c9;"></div>
<span class="t" style="top:649.00px;font-size:12px;line-height:12px;color:#000;letter-spacing:0.811px;left:103.00px;">400500</span>
<span class="t" style="top:649.00px;font-size:12px;line-height:12px;color:#000;letter-spacing:-0.222px;left:229.00px;">Fulkerson, Karen Danz</span>
<span class="t" style="top:649.00px;font-size:12px;line-height:12px;color:#000;letter-spacing:-0.112px;left:355.50px;">S 3,136.00</span>
<span class="t" style="top:649.00px;font-size:12px;line-height:12px;color:#000;letter-spacing:1.341px;left:427.50px;">64</span>
<span class="t" style="top:649.00px;font-size:12px;line-height:12px;color:#000;letter-spacing:-0.010px;left:517.50px;">2 - 49.0...</span>
<span class="t" style="top:649.00px;font-size:12px;line-height:12px;color:#000;left:580.50px;">2</span>
<span class="t" style="top:649.00px;font-size:12px;line-height:12px;color:#000;letter-spacing:-0.027px;left:643.50px;">C - Suppleme...</span>
<span class="t" style="top:649.00px;font-size:12px;line-height:12px;color:#000;letter-spacing:-0.061px;right:1087.56px;">128.20</span>
<div style="left:99.5px;top:668.2px;width:839.5px;height:22.5px;background:#fff;border-bottom:1px solid #c9c9c9;box-sizing:border-box;"></div>
<div style="left:226.0px;top:668.2px;width:1px;height:22.5px;background:#c9c9c9;"></div>
<div style="left:352.0px;top:668.2px;width:1px;height:22.5px;background:#c9c9c9;"></div>
<div style="left:424.0px;top:668.2px;width:1px;height:22.5px;background:#c9c9c9;"></div>
<div style="left:514.0px;top:668.2px;width:1px;height:22.5px;background:#c9c9c9;"></div>
<div style="left:577.0px;top:668.2px;width:1px;height:22.5px;background:#c9c9c9;"></div>
<div style="left:640.0px;top:668.2px;width:1px;height:22.5px;background:#c9c9c9;"></div>
<div style="left:733.0px;top:668.2px;width:1px;height:22.5px;background:#c9c9c9;"></div>
<div style="left:835.0px;top:668.2px;width:1px;height:22.5px;background:#c9c9c9;"></div>
<span class="t" style="top:672.00px;font-size:12px;line-height:12px;color:#000;letter-spacing:0.811px;left:103.00px;">400500</span>
<span class="t" style="top:672.00px;font-size:12px;line-height:12px;color:#000;letter-spacing:-0.176px;left:229.00px;">Glenn, April</span>
<span class="t" style="top:672.00px;font-size:12px;line-height:12px;color:#000;letter-spacing:0.216px;left:355.50px;">S 3,520.00</span>
<span class="t" style="top:672.00px;font-size:12px;line-height:12px;color:#000;letter-spacing:1.341px;left:427.50px;">80</span>
<span class="t" style="top:672.00px;font-size:12px;line-height:12px;color:#000;letter-spacing:-0.010px;left:517.50px;">2 - 44.0...</span>
<span class="t" style="top:672.00px;font-size:12px;line-height:12px;color:#000;left:580.50px;">2</span>
<span class="t" style="top:672.00px;font-size:12px;line-height:12px;color:#000;letter-spacing:-0.027px;left:643.50px;">C - Suppleme...</span>
<span class="t" style="top:672.00px;font-size:12px;line-height:12px;color:#000;letter-spacing:-0.472px;right:1087.97px;">116.60</span>
<div style="left:99.5px;top:690.7px;width:839.5px;height:22.5px;background:#f2f2f2;border-bottom:1px solid #c9c9c9;box-sizing:border-box;"></div>
<div style="left:226.0px;top:690.7px;width:1px;height:22.5px;background:#c9c9c9;"></div>
<div style="left:352.0px;top:690.7px;width:1px;height:22.5px;background:#c9c9c9;"></div>
<div style="left:424.0px;top:690.7px;width:1px;height:22.5px;background:#c9c9c9;"></div>
<div style="left:514.0px;top:690.7px;width:1px;height:22.5px;background:#c9c9c9;"></div>
<div style="left:577.0px;top:690.7px;width:1px;height:22.5px;background:#c9c9c9;"></div>
<div style="left:640.0px;top:690.7px;width:1px;height:22.5px;background:#c9c9c9;"></div>
<div style="left:733.0px;top:690.7px;width:1px;height:22.5px;background:#c9c9c9;"></div>
<div style="left:835.0px;top:690.7px;width:1px;height:22.5px;background:#c9c9c9;"></div>
<span class="t" style="top:694.00px;font-size:12px;line-height:12px;color:#000;letter-spacing:0.811px;left:103.00px;">400500</span>
<span class="t" style="top:694.00px;font-size:12px;line-height:12px;color:#000;letter-spacing:-0.230px;left:229.00px;">Gunness, Laurie</span>
<span class="t" style="top:694.00px;font-size:12px;line-height:12px;color:#000;letter-spacing:0.216px;left:355.50px;">S 3,760.00</span>
<span class="t" style="top:694.00px;font-size:12px;line-height:12px;color:#000;letter-spacing:1.341px;left:427.50px;">80</span>
<span class="t" style="top:694.00px;font-size:12px;line-height:12px;color:#000;letter-spacing:-0.010px;left:517.50px;">2 - 47.0...</span>
<span class="t" style="top:694.00px;font-size:12px;line-height:12px;color:#000;left:580.50px;">2</span>
<span class="t" style="top:694.00px;font-size:12px;line-height:12px;color:#000;letter-spacing:-0.027px;left:643.50px;">C - Suppleme...</span>
<span class="t" style="top:694.00px;font-size:12px;line-height:12px;color:#000;letter-spacing:-0.061px;right:1087.56px;">106.90</span>
<div style="left:99.5px;top:713.2px;width:839.5px;height:22.5px;background:#fff;border-bottom:1px solid #c9c9c9;box-sizing:border-box;"></div>
<div style="left:226.0px;top:713.2px;width:1px;height:22.5px;background:#c9c9c9;"></div>
<div style="left:352.0px;top:713.2px;width:1px;height:22.5px;background:#c9c9c9;"></div>
<div style="left:424.0px;top:713.2px;width:1px;height:22.5px;background:#c9c9c9;"></div>
<div style="left:514.0px;top:713.2px;width:1px;height:22.5px;background:#c9c9c9;"></div>
<div style="left:577.0px;top:713.2px;width:1px;height:22.5px;background:#c9c9c9;"></div>
<div style="left:640.0px;top:713.2px;width:1px;height:22.5px;background:#c9c9c9;"></div>
<div style="left:733.0px;top:713.2px;width:1px;height:22.5px;background:#c9c9c9;"></div>
<div style="left:835.0px;top:713.2px;width:1px;height:22.5px;background:#c9c9c9;"></div>
<span class="t" style="top:717.00px;font-size:12px;line-height:12px;color:#000;letter-spacing:0.811px;left:103.00px;">400500</span>
<span class="t" style="top:717.00px;font-size:12px;line-height:12px;color:#000;letter-spacing:-0.218px;left:229.00px;">Holbird, Katie Mary</span>
<span class="t" style="top:717.00px;font-size:12px;line-height:12px;color:#000;letter-spacing:0.216px;left:355.50px;">S 3,600.00</span>
<span class="t" style="top:717.00px;font-size:12px;line-height:12px;color:#000;letter-spacing:1.341px;left:427.50px;">80</span>
<span class="t" style="top:717.00px;font-size:12px;line-height:12px;color:#000;letter-spacing:-0.010px;left:517.50px;">2 - 45.0...</span>
<span class="t" style="top:717.00px;font-size:12px;line-height:12px;color:#000;left:580.50px;">2</span>
<span class="t" style="top:717.00px;font-size:12px;line-height:12px;color:#000;letter-spacing:-0.027px;left:643.50px;">C - Suppleme...</span>
<span class="t" style="top:717.00px;font-size:12px;line-height:12px;color:#000;letter-spacing:0.529px;right:1086.97px;">202.40</span>
<div style="left:99.5px;top:735.7px;width:839.5px;height:22.5px;background:#f2f2f2;border-bottom:1px solid #c9c9c9;box-sizing:border-box;"></div>
<div style="left:226.0px;top:735.7px;width:1px;height:22.5px;background:#c9c9c9;"></div>
<div style="left:352.0px;top:735.7px;width:1px;height:22.5px;background:#c9c9c9;"></div>
<div style="left:424.0px;top:735.7px;width:1px;height:22.5px;background:#c9c9c9;"></div>
<div style="left:514.0px;top:735.7px;width:1px;height:22.5px;background:#c9c9c9;"></div>
<div style="left:577.0px;top:735.7px;width:1px;height:22.5px;background:#c9c9c9;"></div>
<div style="left:640.0px;top:735.7px;width:1px;height:22.5px;background:#c9c9c9;"></div>
<div style="left:733.0px;top:735.7px;width:1px;height:22.5px;background:#c9c9c9;"></div>
<div style="left:835.0px;top:735.7px;width:1px;height:22.5px;background:#c9c9c9;"></div>
<span class="t" style="top:739.00px;font-size:12px;line-height:12px;color:#000;letter-spacing:0.811px;left:103.00px;">400500</span>
<span class="t" style="top:739.00px;font-size:12px;line-height:12px;color:#000;letter-spacing:-0.147px;left:229.00px;">Keeler, Tina Marie</span>
<span class="t" style="top:739.00px;font-size:12px;line-height:12px;color:#000;letter-spacing:0.216px;left:355.50px;">S 3,780.00</span>
<span class="t" style="top:739.00px;font-size:12px;line-height:12px;color:#000;letter-spacing:1.341px;left:427.50px;">80</span>
<span class="t" style="top:739.00px;font-size:12px;line-height:12px;color:#000;letter-spacing:-0.010px;left:517.50px;">2 - 46.0...</span>
<span class="t" style="top:739.00px;font-size:12px;line-height:12px;color:#000;left:580.50px;">2</span>
<span class="t" style="top:739.00px;font-size:12px;line-height:12px;color:#000;letter-spacing:-0.027px;left:643.50px;">C - Suppleme...</span>
<span class="t" style="top:739.00px;font-size:12px;line-height:12px;color:#000;letter-spacing:-0.061px;right:1087.56px;">166.20</span>
<div style="left:99.5px;top:758.2px;width:839.5px;height:22.5px;background:#fff;border-bottom:1px solid #c9c9c9;box-sizing:border-box;"></div>
<div style="left:226.0px;top:758.2px;width:1px;height:22.5px;background:#c9c9c9;"></div>
<div style="left:352.0px;top:758.2px;width:1px;height:22.5px;background:#c9c9c9;"></div>
<div style="left:424.0px;top:758.2px;width:1px;height:22.5px;background:#c9c9c9;"></div>
<div style="left:514.0px;top:758.2px;width:1px;height:22.5px;background:#c9c9c9;"></div>
<div style="left:577.0px;top:758.2px;width:1px;height:22.5px;background:#c9c9c9;"></div>
<div style="left:640.0px;top:758.2px;width:1px;height:22.5px;background:#c9c9c9;"></div>
<div style="left:733.0px;top:758.2px;width:1px;height:22.5px;background:#c9c9c9;"></div>
<div style="left:835.0px;top:758.2px;width:1px;height:22.5px;background:#c9c9c9;"></div>
<span class="t" style="top:762.00px;font-size:12px;line-height:12px;color:#000;letter-spacing:0.811px;left:103.00px;">400500</span>
<span class="t" style="top:762.00px;font-size:12px;line-height:12px;color:#000;letter-spacing:-0.212px;left:229.00px;">Largent, Edna Lorraine</span>
<span class="t" style="top:762.00px;font-size:12px;line-height:12px;color:#000;letter-spacing:0.216px;left:355.50px;">S 2,700.00</span>
<span class="t" style="top:762.00px;font-size:12px;line-height:12px;color:#000;letter-spacing:1.341px;left:427.50px;">60</span>
<span class="t" style="top:762.00px;font-size:12px;line-height:12px;color:#000;letter-spacing:-0.010px;left:517.50px;">2 - 45.0...</span>
<span class="t" style="top:762.00px;font-size:12px;line-height:12px;color:#000;left:580.50px;">2</span>
<span class="t" style="top:762.00px;font-size:12px;line-height:12px;color:#000;letter-spacing:-0.027px;left:643.50px;">C - Suppleme...</span>
<span class="t" style="top:762.00px;font-size:12px;line-height:12px;color:#000;letter-spacing:0.430px;right:1087.07px;">0.90</span>
<div style="left:99.5px;top:780.7px;width:839.5px;height:22.5px;background:#bccff8;border-bottom:1px solid #c9c9c9;box-sizing:border-box;"></div>
<div style="left:226.0px;top:780.7px;width:1px;height:22.5px;background:#c9c9c9;"></div>
<div style="left:352.0px;top:780.7px;width:1px;height:22.5px;background:#c9c9c9;"></div>
<div style="left:424.0px;top:780.7px;width:1px;height:22.5px;background:#c9c9c9;"></div>
<div style="left:514.0px;top:780.7px;width:1px;height:22.5px;background:#c9c9c9;"></div>
<div style="left:577.0px;top:780.7px;width:1px;height:22.5px;background:#c9c9c9;"></div>
<div style="left:640.0px;top:780.7px;width:1px;height:22.5px;background:#c9c9c9;"></div>
<div style="left:733.0px;top:780.7px;width:1px;height:22.5px;background:#c9c9c9;"></div>
<div style="left:835.0px;top:780.7px;width:1px;height:22.5px;background:#c9c9c9;"></div>
<span class="t" style="top:784.00px;font-size:12px;line-height:12px;color:#4a69c6;letter-spacing:0.811px;left:103.00px;">400500</span>
<span class="t" style="top:784.00px;font-size:12px;line-height:12px;color:#4a69c6;letter-spacing:-0.222px;left:229.00px;">Maldonado, Marlena</span>
<span class="t" style="top:784.00px;font-size:12px;line-height:12px;color:#4a69c6;letter-spacing:0.216px;left:355.50px;">S 3,076.92</span>
<span class="t" style="top:784.00px;font-size:12px;line-height:12px;color:#4a69c6;letter-spacing:1.341px;left:427.50px;">80</span>
<span class="t" style="top:784.00px;font-size:12px;line-height:12px;color:#4a69c6;letter-spacing:-0.010px;left:517.50px;">2 - 38.4...</span>
<span class="t" style="top:784.00px;font-size:12px;line-height:12px;color:#4a69c6;left:580.50px;">2</span>
<span class="t" style="top:784.00px;font-size:12px;line-height:12px;color:#4a69c6;letter-spacing:-0.027px;left:643.50px;">C - Suppleme...</span>
<div style="left:734px;top:780.7px;width:101.5px;height:22px;background:#fff;border:1.6px solid #000;box-sizing:border-box;"></div>
<span class="t" style="top:784.00px;font-size:12px;line-height:12px;color:#000;letter-spacing:0.492px;right:1088.01px;">60.70</span>
<div style="left:99.5px;top:803.2px;width:839.5px;height:22.5px;background:#9bb7ef;border-bottom:1px solid #c9c9c9;box-sizing:border-box;"></div>
<div style="left:226.0px;top:803.2px;width:1px;height:22.5px;background:#c9c9c9;"></div>
<div style="left:352.0px;top:803.2px;width:1px;height:22.5px;background:#c9c9c9;"></div>
<div style="left:424.0px;top:803.2px;width:1px;height:22.5px;background:#c9c9c9;"></div>
<div style="left:514.0px;top:803.2px;width:1px;height:22.5px;background:#c9c9c9;"></div>
<div style="left:577.0px;top:803.2px;width:1px;height:22.5px;background:#c9c9c9;"></div>
<div style="left:640.0px;top:803.2px;width:1px;height:22.5px;background:#c9c9c9;"></div>
<div style="left:733.0px;top:803.2px;width:1px;height:22.5px;background:#c9c9c9;"></div>
<div style="left:835.0px;top:803.2px;width:1px;height:22.5px;background:#c9c9c9;"></div>
<span class="t" style="top:807.00px;font-size:12px;line-height:12px;color:#000;letter-spacing:0.811px;left:103.00px;">400500</span>
<span class="t" style="top:807.00px;font-size:12px;line-height:12px;color:#000;letter-spacing:-0.162px;left:229.00px;">Maloney, Lori</span>
<span class="t" style="top:807.00px;font-size:12px;line-height:12px;color:#000;letter-spacing:0.216px;left:355.50px;">S 4,000.00</span>
<span class="t" style="top:807.00px;font-size:12px;line-height:12px;color:#000;letter-spacing:1.341px;left:427.50px;">80</span>
<span class="t" style="top:807.00px;font-size:12px;line-height:12px;color:#000;letter-spacing:-0.010px;left:517.50px;">2 - 50.0...</span>
<span class="t" style="top:807.00px;font-size:12px;line-height:12px;color:#000;left:580.50px;">2</span>
<span class="t" style="top:807.00px;font-size:12px;line-height:12px;color:#000;letter-spacing:-0.027px;left:643.50px;">C - Suppleme...</span>
<div style="left:99.5px;top:825.7px;width:839.5px;height:22.5px;background:#f2f2f2;border-bottom:1px solid #c9c9c9;box-sizing:border-box;"></div>
<div style="left:226.0px;top:825.7px;width:1px;height:22.5px;background:#c9c9c9;"></div>
<div style="left:352.0px;top:825.7px;width:1px;height:22.5px;background:#c9c9c9;"></div>
<div style="left:424.0px;top:825.7px;width:1px;height:22.5px;background:#c9c9c9;"></div>
<div style="left:514.0px;top:825.7px;width:1px;height:22.5px;background:#c9c9c9;"></div>
<div style="left:577.0px;top:825.7px;width:1px;height:22.5px;background:#c9c9c9;"></div>
<div style="left:640.0px;top:825.7px;width:1px;height:22.5px;background:#c9c9c9;"></div>
<div style="left:733.0px;top:825.7px;width:1px;height:22.5px;background:#c9c9c9;"></div>
<div style="left:835.0px;top:825.7px;width:1px;height:22.5px;background:#c9c9c9;"></div>
<span class="t" style="top:829.00px;font-size:12px;line-height:12px;color:#000;letter-spacing:0.811px;left:103.00px;">400500</span>
<span class="t" style="top:829.00px;font-size:12px;line-height:12px;color:#000;letter-spacing:-0.300px;left:229.00px;">Ouzounian, Cynthia ...</span>
<span class="t" style="top:829.00px;font-size:12px;line-height:12px;color:#000;letter-spacing:0.216px;left:355.50px;">S 4,000.00</span>
<span class="t" style="top:829.00px;font-size:12px;line-height:12px;color:#000;letter-spacing:1.341px;left:427.50px;">80</span>
<span class="t" style="top:829.00px;font-size:12px;line-height:12px;color:#000;letter-spacing:-0.010px;left:517.50px;">2 - 50.0...</span>
<span class="t" style="top:829.00px;font-size:12px;line-height:12px;color:#000;left:580.50px;">2</span>
<span class="t" style="top:829.00px;font-size:12px;line-height:12px;color:#000;letter-spacing:-0.027px;left:643.50px;">C - Suppleme...</span>
<span class="t" style="top:829.00px;font-size:12px;line-height:12px;color:#000;letter-spacing:0.492px;right:1087.01px;">48.20</span>
<div style="left:99.5px;top:848.2px;width:839.5px;height:22.5px;background:#fff;border-bottom:1px solid #c9c9c9;box-sizing:border-box;"></div>
<div style="left:226.0px;top:848.2px;width:1px;height:22.5px;background:#c9c9c9;"></div>
<div style="left:352.0px;top:848.2px;width:1px;height:22.5px;background:#c9c9c9;"></div>
<div style="left:424.0px;top:848.2px;width:1px;height:22.5px;background:#c9c9c9;"></div>
<div style="left:514.0px;top:848.2px;width:1px;height:22.5px;background:#c9c9c9;"></div>
<div style="left:577.0px;top:848.2px;width:1px;height:22.5px;background:#c9c9c9;"></div>
<div style="left:640.0px;top:848.2px;width:1px;height:22.5px;background:#c9c9c9;"></div>
<div style="left:733.0px;top:848.2px;width:1px;height:22.5px;background:#c9c9c9;"></div>
<div style="left:835.0px;top:848.2px;width:1px;height:22.5px;background:#c9c9c9;"></div>
<span class="t" style="top:852.00px;font-size:12px;line-height:12px;color:#000;letter-spacing:0.811px;left:103.00px;">400500</span>
<span class="t" style="top:852.00px;font-size:12px;line-height:12px;color:#000;letter-spacing:-0.098px;left:229.00px;">Rigato, Teri Andrea</span>
<span class="t" style="top:852.00px;font-size:12px;line-height:12px;color:#000;letter-spacing:0.216px;left:355.50px;">S 3,200.00</span>
<span class="t" style="top:852.00px;font-size:12px;line-height:12px;color:#000;letter-spacing:1.341px;left:427.50px;">80</span>
<span class="t" style="top:852.00px;font-size:12px;line-height:12px;color:#000;letter-spacing:-0.010px;left:517.50px;">2 - 40.0...</span>
<span class="t" style="top:852.00px;font-size:12px;line-height:12px;color:#000;left:580.50px;">2</span>
<span class="t" style="top:852.00px;font-size:12px;line-height:12px;color:#000;letter-spacing:-0.027px;left:643.50px;">C - Suppleme...</span>
<div style="left:99.5px;top:870.7px;width:839.5px;height:22.5px;background:#f2f2f2;border-bottom:1px solid #c9c9c9;box-sizing:border-box;"></div>
<div style="left:226.0px;top:870.7px;width:1px;height:22.5px;background:#c9c9c9;"></div>
<div style="left:352.0px;top:870.7px;width:1px;height:22.5px;background:#c9c9c9;"></div>
<div style="left:424.0px;top:870.7px;width:1px;height:22.5px;background:#c9c9c9;"></div>
<div style="left:514.0px;top:870.7px;width:1px;height:22.5px;background:#c9c9c9;"></div>
<div style="left:577.0px;top:870.7px;width:1px;height:22.5px;background:#c9c9c9;"></div>
<div style="left:640.0px;top:870.7px;width:1px;height:22.5px;background:#c9c9c9;"></div>
<div style="left:733.0px;top:870.7px;width:1px;height:22.5px;background:#c9c9c9;"></div>
<div style="left:835.0px;top:870.7px;width:1px;height:22.5px;background:#c9c9c9;"></div>
<span class="t" style="top:874.00px;font-size:12px;line-height:12px;color:#000;letter-spacing:0.811px;left:103.00px;">400500</span>
<span class="t" style="top:874.00px;font-size:12px;line-height:12px;color:#000;letter-spacing:-0.261px;left:229.00px;">Saunders, Brooke Ali...</span>
<span class="t" style="top:874.00px;font-size:12px;line-height:12px;color:#000;letter-spacing:0.216px;left:355.50px;">S 2,884.62</span>
<span class="t" style="top:874.00px;font-size:12px;line-height:12px;color:#000;letter-spacing:1.341px;left:427.50px;">80</span>
<span class="t" style="top:874.00px;font-size:12px;line-height:12px;color:#000;letter-spacing:-0.010px;left:517.50px;">2 - 36.0...</span>
<span class="t" style="top:874.00px;font-size:12px;line-height:12px;color:#000;left:580.50px;">2</span>
<span class="t" style="top:874.00px;font-size:12px;line-height:12px;color:#000;letter-spacing:-0.027px;left:643.50px;">C - Suppleme...</span>
<div style="left:99.5px;top:893.2px;width:839.5px;height:22.5px;background:#fff;border-bottom:1px solid #c9c9c9;box-sizing:border-box;"></div>
<div style="left:226.0px;top:893.2px;width:1px;height:22.5px;background:#c9c9c9;"></div>
<div style="left:352.0px;top:893.2px;width:1px;height:22.5px;background:#c9c9c9;"></div>
<div style="left:424.0px;top:893.2px;width:1px;height:22.5px;background:#c9c9c9;"></div>
<div style="left:514.0px;top:893.2px;width:1px;height:22.5px;background:#c9c9c9;"></div>
<div style="left:577.0px;top:893.2px;width:1px;height:22.5px;background:#c9c9c9;"></div>
<div style="left:640.0px;top:893.2px;width:1px;height:22.5px;background:#c9c9c9;"></div>
<div style="left:733.0px;top:893.2px;width:1px;height:22.5px;background:#c9c9c9;"></div>
<div style="left:835.0px;top:893.2px;width:1px;height:22.5px;background:#c9c9c9;"></div>
<span class="t" style="top:897.00px;font-size:12px;line-height:12px;color:#000;letter-spacing:0.811px;left:103.00px;">400500</span>
<span class="t" style="top:897.00px;font-size:12px;line-height:12px;color:#000;letter-spacing:-0.151px;left:229.00px;">Tebedo, Meghan</span>
<span class="t" style="top:897.00px;font-size:12px;line-height:12px;color:#000;letter-spacing:0.216px;left:355.50px;">S 3,360.00</span>
<span class="t" style="top:897.00px;font-size:12px;line-height:12px;color:#000;letter-spacing:1.341px;left:427.50px;">80</span>
<span class="t" style="top:897.00px;font-size:12px;line-height:12px;color:#000;letter-spacing:-0.010px;left:517.50px;">2 - 42.0...</span>
<span class="t" style="top:897.00px;font-size:12px;line-height:12px;color:#000;left:580.50px;">2</span>
<span class="t" style="top:897.00px;font-size:12px;line-height:12px;color:#000;letter-spacing:-0.027px;left:643.50px;">C - Suppleme...</span>
<div style="left:99.5px;top:915.7px;width:839.5px;height:22.5px;background:#f2f2f2;border-bottom:1px solid #c9c9c9;box-sizing:border-box;"></div>
<div style="left:226.0px;top:915.7px;width:1px;height:22.5px;background:#c9c9c9;"></div>
<div style="left:352.0px;top:915.7px;width:1px;height:22.5px;background:#c9c9c9;"></div>
<div style="left:424.0px;top:915.7px;width:1px;height:22.5px;background:#c9c9c9;"></div>
<div style="left:514.0px;top:915.7px;width:1px;height:22.5px;background:#c9c9c9;"></div>
<div style="left:577.0px;top:915.7px;width:1px;height:22.5px;background:#c9c9c9;"></div>
<div style="left:640.0px;top:915.7px;width:1px;height:22.5px;background:#c9c9c9;"></div>
<div style="left:733.0px;top:915.7px;width:1px;height:22.5px;background:#c9c9c9;"></div>
<div style="left:835.0px;top:915.7px;width:1px;height:22.5px;background:#c9c9c9;"></div>
<span class="t" style="top:919.00px;font-size:12px;line-height:12px;color:#000;letter-spacing:0.811px;left:103.00px;">400500</span>
<span class="t" style="top:919.00px;font-size:12px;line-height:12px;color:#000;letter-spacing:-0.158px;left:229.00px;">Wurzinger, Heidi</span>
<span class="t" style="top:919.00px;font-size:12px;line-height:12px;color:#000;letter-spacing:0.216px;left:355.50px;">S 3,880.00</span>
<span class="t" style="top:919.00px;font-size:12px;line-height:12px;color:#000;letter-spacing:1.341px;left:427.50px;">80</span>
<span class="t" style="top:919.00px;font-size:12px;line-height:12px;color:#000;letter-spacing:-0.305px;left:517.50px;">2 - 41.0...</span>
<span class="t" style="top:919.00px;font-size:12px;line-height:12px;color:#000;left:580.50px;">2</span>
<span class="t" style="top:919.00px;font-size:12px;line-height:12px;color:#000;letter-spacing:-0.027px;left:643.50px;">C - Suppleme...</span>
</div>
<svg style="left:941.5px;top:583px;" width="10" height="7" viewBox="0 0 10 7"><path d="M0.3 6.4L5 0.6L9.7 6.4Q9.9 7 9.2 7H0.8Q0.1 7 0.3 6.4Z" fill="#8a8a8a"/></svg>
<div style="left:942px;top:657px;width:8px;height:236px;background:#8b8b8b;border-radius:4px;"></div>
<svg style="left:941.5px;top:911px;" width="10" height="7" viewBox="0 0 10 7"><path d="M0.3 0.6L5 6.4L9.7 0.6Q9.9 0 9.2 0H0.8Q0.1 0 0.3 0.6Z" fill="#8a8a8a"/></svg>
<div style="left:99.5px;top:923px;width:855px;height:15px;background:#fcfcfc;"></div>
<svg style="left:103.5px;top:925.5px;" width="7" height="10" viewBox="0 0 7 10"><path d="M6.4 0.3L0.6 5L6.4 9.7Q7 9.9 7 9.2V0.8Q7 0.1 6.4 0.3Z" fill="#8a8a8a"/></svg>
<div style="left:117px;top:926px;width:732px;height:8px;background:#8b8b8b;border-radius:4px;"></div>
<svg style="left:927px;top:925.5px;" width="7" height="10" viewBox="0 0 7 10"><path d="M0.6 0.3L6.4 5L0.6 9.7Q0 9.9 0 9.2V0.8Q0 0.1 0.6 0.3Z" fill="#8a8a8a"/></svg>
<div style="left:30px;top:946.5px;width:907px;height:1.6px;background:#000;"></div>
<div style="left:30px;top:948px;width:909px;height:22px;background:#fff;border-bottom:1px solid #c9c9c9;box-sizing:border-box;"></div>
<div style="left:226.0px;top:948px;width:1px;height:22px;background:#c9c9c9;"></div>
<div style="left:352.0px;top:948px;width:1px;height:22px;background:#c9c9c9;"></div>
<div style="left:424.0px;top:948px;width:1px;height:22px;background:#c9c9c9;"></div>
<div style="left:514.0px;top:948px;width:1px;height:22px;background:#c9c9c9;"></div>
<div style="left:577.0px;top:948px;width:1px;height:22px;background:#c9c9c9;"></div>
<div style="left:640.0px;top:948px;width:1px;height:22px;background:#c9c9c9;"></div>
<div style="left:733.0px;top:948px;width:1px;height:22px;background:#c9c9c9;"></div>
<div style="left:835.0px;top:948px;width:1px;height:22px;background:#c9c9c9;"></div>
<span class="t" style="top:951.00px;font-size:12px;line-height:12px;color:#000;letter-spacing:-0.028px;left:34.00px;">Batch Tot...</span>
<div style="left:30px;top:970px;width:909px;height:22px;background:#f2f2f2;border-bottom:1px solid #c9c9c9;box-sizing:border-box;"></div>
<div style="left:226.0px;top:970px;width:1px;height:22px;background:#c9c9c9;"></div>
<div style="left:352.0px;top:970px;width:1px;height:22px;background:#c9c9c9;"></div>
<div style="left:424.0px;top:970px;width:1px;height:22px;background:#c9c9c9;"></div>
<div style="left:514.0px;top:970px;width:1px;height:22px;background:#c9c9c9;"></div>
<div style="left:577.0px;top:970px;width:1px;height:22px;background:#c9c9c9;"></div>
<div style="left:640.0px;top:970px;width:1px;height:22px;background:#c9c9c9;"></div>
<div style="left:733.0px;top:970px;width:1px;height:22px;background:#c9c9c9;"></div>
<div style="left:835.0px;top:970px;width:1px;height:22px;background:#c9c9c9;"></div>
<span class="t" style="top:973.00px;font-size:12px;line-height:12px;color:#000;letter-spacing:-0.222px;left:34.00px;">Your Totals</span>
<div style="left:30px;top:992px;width:909px;height:22px;background:#fff;border-bottom:1px solid #c9c9c9;box-sizing:border-box;"></div>
<div style="left:226.0px;top:992px;width:1px;height:22px;background:#c9c9c9;"></div>
<div style="left:352.0px;top:992px;width:1px;height:22px;background:#c9c9c9;"></div>
<div style="left:424.0px;top:992px;width:1px;height:22px;background:#c9c9c9;"></div>
<div style="left:514.0px;top:992px;width:1px;height:22px;background:#c9c9c9;"></div>
<div style="left:577.0px;top:992px;width:1px;height:22px;background:#c9c9c9;"></div>
<div style="left:640.0px;top:992px;width:1px;height:22px;background:#c9c9c9;"></div>
<div style="left:733.0px;top:992px;width:1px;height:22px;background:#c9c9c9;"></div>
<div style="left:835.0px;top:992px;width:1px;height:22px;background:#c9c9c9;"></div>
<span class="t" style="top:995.00px;font-size:12px;line-height:12px;color:#000;letter-spacing:0.057px;left:34.00px;">Difference</span>
<div style="left:97.9px;top:946.5px;width:1.4px;height:67px;background:#000;"></div>
<span class="t" style="top:951.00px;font-size:12px;line-height:12px;color:#000;letter-spacing:-0.053px;right:1087.55px;">1,644.80</span>
<span class="t" style="top:951.00px;font-size:12px;line-height:12px;color:#000;letter-spacing:-0.061px;right:983.56px;">561.40</span>
<div style="left:734px;top:969.5px;width:101px;height:21.5px;background:#fff;border:1.3px solid #2f7f95;box-sizing:border-box;"></div>
<div style="left:836px;top:969.5px;width:102px;height:21.5px;background:#fff;border:1.3px solid #2f7f95;border-right:none;box-sizing:border-box;"></div>
<span class="t" style="top:973.00px;font-size:12px;line-height:12px;color:#000;letter-spacing:0.430px;right:1088.07px;">0.00</span>
<span class="t" style="top:973.00px;font-size:12px;line-height:12px;color:#000;letter-spacing:0.430px;right:984.07px;">0.00</span>
<span class="t" style="top:995.00px;font-size:12px;line-height:12px;color:#f0141e;letter-spacing:-0.053px;right:1087.55px;">1,644.80</span>
<span class="t" style="top:995.00px;font-size:12px;line-height:12px;color:#f0141e;letter-spacing:-0.061px;right:983.56px;">561.40</span>
<div style="left:949px;top:798px;width:35px;height:128px;background:#4a69c6;border-radius:7px 0 0 7px;"></div>
<div style="left:957px;top:807px;width:18px;height:18px;background:#fff;border-radius:9px;"></div>
<span class="t" style="top:809.00px;font-size:14px;line-height:14px;color:#4a69c6;font-weight:700;left:666.00px;width:600px;text-align:center;">?</span>
<div style="left:964px;top:834px;width:0;height:0;transform:rotate(90deg);transform-origin:0 0;"><span class="t" style="top:-11.00px;font-size:13.5px;line-height:13.5px;color:#fff;font-weight:700;letter-spacing:0.304px;left:0.00px;top:-9.5px;">Need Help?</span></div>
<svg style="left:5.5px;top:1018px;" width="7" height="10" viewBox="0 0 7 10"><path d="M6.4 0.3L0.6 5L6.4 9.7Q7 9.9 7 9.2V0.8Q7 0.1 6.4 0.3Z" fill="#8a8a8a"/></svg>
<div style="left:19px;top:1019px;width:823px;height:8px;background:#8b8b8b;border-radius:4px;"></div>
<svg style="left:970.5px;top:1018px;" width="7" height="10" viewBox="0 0 7 10"><path d="M0.6 0.3L6.4 5L0.6 9.7Q0 9.9 0 9.2V0.8Q0 0.1 0.6 0.3Z" fill="#8a8a8a"/></svg>
<!-- sec_pdf -->
<div style="left:1042px;top:103px;width:777px;height:927px;background:#fff;"></div>
<span class="t" style="top:176.00px;font-size:18.4px;line-height:18.4px;color:#000;font-weight:700;letter-spacing:-2.123px;left:1214.40px;">Case</span>
<span class="t" style="top:176.00px;font-size:18.4px;line-height:18.4px;color:#000;font-weight:700;letter-spacing:-0.240px;left:1258.30px;">Manager</span>
<span class="t" style="top:176.00px;font-size:18.4px;line-height:18.4px;color:#000;font-weight:700;letter-spacing:-0.592px;left:1338.60px;">Incentive</span>
<span class="t" style="top:176.00px;font-size:18.4px;line-height:18.4px;color:#000;font-weight:700;letter-spacing:-0.703px;left:1420.00px;">Compensation</span>
<span class="t" style="top:176.00px;font-size:18.4px;line-height:18.4px;color:#000;font-weight:700;letter-spacing:-0.236px;left:1547.20px;">Worksheet</span>
<span class="t" style="top:202.00px;font-size:18.4px;line-height:18.4px;color:#000;font-weight:700;letter-spacing:-0.592px;left:1214.40px;">Incentive</span>
<span class="t" style="top:202.00px;font-size:18.4px;line-height:18.4px;color:#000;font-weight:700;letter-spacing:-0.703px;left:1296.70px;">Compensation</span>
<span class="t" style="top:202.00px;font-size:18.4px;line-height:18.4px;color:#000;font-weight:700;letter-spacing:-0.693px;left:1422.80px;">Period:</span>
<span class="t" style="top:202.00px;font-size:18.4px;line-height:18.4px;color:#000;font-weight:700;letter-spacing:0.777px;left:1487.50px;">2/23/26 - 3/22/26</span>
<div style="left:1106px;top:223px;width:640px;height:55px;background:#d9d9d9;"></div>
<div style="left:1300.5px;top:278.8px;width:82px;height:24.80000000000001px;background:#c6efce;"></div>
<div style="left:1300.5px;top:303.6px;width:82px;height:24.80000000000001px;background:#c6efce;"></div>
<div style="left:1300.5px;top:328.40000000000003px;width:82px;height:24.80000000000001px;background:#c6efce;"></div>
<div style="left:1300.5px;top:353.20000000000005px;width:82px;height:24.799999999999955px;background:#c6efce;"></div>
<div style="left:1300.5px;top:378.0px;width:82px;height:24.80000000000001px;background:#c6efce;"></div>
<div style="left:1300.5px;top:402.8px;width:82px;height:24.80000000000001px;background:#c6efce;"></div>
<div style="left:1300.5px;top:427.6px;width:82px;height:24.799999999999955px;background:#ccffcc;"></div>
<div style="left:1300.5px;top:452.4px;width:82px;height:24.800000000000068px;background:#c6efce;"></div>
<div style="left:1300.5px;top:477.20000000000005px;width:82px;height:24.799999999999955px;background:#c6efce;"></div>
<div style="left:1300.5px;top:502.0px;width:82px;height:24.799999999999955px;background:#c6efce;"></div>
<div style="left:1300.5px;top:526.8px;width:82px;height:24.800000000000068px;background:#c6efce;"></div>
<div style="left:1300.5px;top:551.6px;width:82px;height:24.800000000000068px;background:#c6efce;"></div>
<div style="left:1300.5px;top:576.4000000000001px;width:82px;height:24.799999999999955px;background:#c6efce;"></div>
<div style="left:1300.5px;top:601.2px;width:82px;height:24.799999999999955px;background:#c6efce;"></div>
<div style="left:1300.5px;top:626.0px;width:82px;height:24.799999999999955px;background:#c6efce;"></div>
<div style="left:1300.5px;top:650.8px;width:82px;height:24.800000000000068px;background:#c6efce;"></div>
<div style="left:1300.5px;top:675.6px;width:82px;height:24.800000000000068px;background:#c6efce;"></div>
<div style="left:1300.5px;top:700.4000000000001px;width:82px;height:24.799999999999955px;background:#c6efce;"></div>
<div style="left:1300.5px;top:725.2px;width:82px;height:24.799999999999955px;background:#c6efce;"></div>
<div style="left:1300.5px;top:790.8px;width:82px;height:24.800000000000068px;background:#c6efce;"></div>
<div style="left:1300.5px;top:815.6px;width:82px;height:24.799999999999955px;background:#c6efce;"></div>
<div style="left:1106px;top:840px;width:194.5px;height:18.6px;background:#d0cece;"></div>
<div style="left:1300.5px;top:840px;width:82px;height:18.6px;background:#c6efce;"></div>
<div style="left:1105px;top:222px;width:642px;height:2px;background:#000;"></div>
<div style="left:1105px;top:277px;width:642px;height:1.5px;background:#000;"></div>
<div style="left:1105px;top:303.0px;width:642px;height:1.2px;background:#000;"></div>
<div style="left:1105px;top:327.8px;width:642px;height:1.2px;background:#000;"></div>
<div style="left:1105px;top:352.20000000000005px;width:642px;height:2px;background:#000;"></div>
<div style="left:1105px;top:377.0px;width:642px;height:2px;background:#000;"></div>
<div style="left:1105px;top:401.8px;width:642px;height:2px;background:#000;"></div>
<div style="left:1105px;top:427.0px;width:642px;height:1.2px;background:#000;"></div>
<div style="left:1105px;top:451.4px;width:642px;height:2px;background:#000;"></div>
<div style="left:1105px;top:476.20000000000005px;width:642px;height:2px;background:#000;"></div>
<div style="left:1105px;top:501.0px;width:642px;height:2px;background:#000;"></div>
<div style="left:1105px;top:526.1999999999999px;width:642px;height:1.2px;background:#000;"></div>
<div style="left:1105px;top:551.0px;width:642px;height:1.2px;background:#000;"></div>
<div style="left:1105px;top:575.4000000000001px;width:642px;height:2px;background:#000;"></div>
<div style="left:1105px;top:600.2px;width:642px;height:2px;background:#000;"></div>
<div style="left:1105px;top:625.0px;width:642px;height:2px;background:#000;"></div>
<div style="left:1105px;top:650.1999999999999px;width:642px;height:1.2px;background:#000;"></div>
<div style="left:1105px;top:675.0px;width:642px;height:1.2px;background:#000;"></div>
<div style="left:1105px;top:699.8000000000001px;width:642px;height:1.2px;background:#000;"></div>
<div style="left:1105px;top:724.2px;width:642px;height:2px;background:#000;"></div>
<div style="left:1105px;top:749.0px;width:642px;height:2px;background:#000;"></div>
<div style="left:1105px;top:790.1999999999999px;width:642px;height:1.2px;background:#000;"></div>
<div style="left:1105px;top:814.6px;width:642px;height:2px;background:#000;"></div>
<div style="left:1105px;top:839.4px;width:642px;height:2px;background:#000;"></div>
<div style="left:1105px;top:858px;width:642px;height:1.3px;background:#000;"></div>
<div style="left:1105px;top:222px;width:2.2px;height:637px;background:#000;"></div>
<div style="left:1216px;top:223px;width:1.3px;height:617px;background:#000;"></div>
<div style="left:1300px;top:223px;width:1.3px;height:636px;background:#000;"></div>
<div style="left:1382px;top:223px;width:2.2px;height:636px;background:#000;"></div>
<div style="left:1745px;top:222px;width:2.2px;height:637px;background:#000;"></div>
<span class="t" style="top:246.00px;font-size:12.6px;line-height:12.6px;color:#111;font-weight:700;letter-spacing:-0.338px;left:861.63px;width:600px;text-align:center;">Last Name</span>
<span class="t" style="top:246.00px;font-size:12.6px;line-height:12.6px;color:#111;font-weight:700;letter-spacing:-0.233px;left:958.88px;width:600px;text-align:center;">First Name</span>
<span class="t" style="top:237.00px;font-size:12.6px;line-height:12.6px;color:#111;font-weight:700;letter-spacing:-0.199px;left:1041.90px;width:600px;text-align:center;">Incentive</span>
<span class="t" style="top:255.00px;font-size:12.6px;line-height:12.6px;color:#111;font-weight:700;letter-spacing:-0.335px;left:1041.83px;width:600px;text-align:center;">Hours to Pay</span>
<span class="t" style="top:246.00px;font-size:12.6px;line-height:12.6px;color:#111;font-weight:700;letter-spacing:-0.293px;left:1264.35px;width:600px;text-align:center;">Special Notes for this Pay Period</span>
<span class="t" style="top:285.00px;font-size:13px;line-height:13px;color:#111;letter-spacing:-0.562px;left:1109.00px;">Backhus</span>
<span class="t" style="top:285.00px;font-size:13px;line-height:13px;color:#111;letter-spacing:-0.550px;left:1219.50px;">Stacey</span>
<span class="t" style="top:285.00px;font-size:13px;line-height:13px;color:#0a5c0a;letter-spacing:-0.153px;left:1041.92px;width:600px;text-align:center;">207.00</span>
<span class="t" style="top:310.00px;font-size:13px;line-height:13px;color:#111;letter-spacing:-0.484px;left:1109.00px;">Barbee</span>
<span class="t" style="top:310.00px;font-size:13px;line-height:13px;color:#111;letter-spacing:-0.820px;left:1219.50px;">Ana</span>
<span class="t" style="top:310.00px;font-size:13px;line-height:13px;color:#0a5c0a;letter-spacing:-0.153px;left:1041.92px;width:600px;text-align:center;">213.80</span>
<span class="t" style="top:335.00px;font-size:13px;line-height:13px;color:#111;letter-spacing:-0.585px;left:1109.00px;">Beznoska</span>
<span class="t" style="top:335.00px;font-size:13px;line-height:13px;color:#111;letter-spacing:-1.453px;left:1219.50px;">Eva</span>
<span class="t" style="top:335.00px;font-size:13px;line-height:13px;color:#0a5c0a;letter-spacing:-0.012px;left:1041.99px;width:600px;text-align:center;">41.10</span>
<span class="t" style="top:359.00px;font-size:13px;line-height:13px;color:#111;letter-spacing:-0.350px;left:1109.00px;">Bishop</span>
<span class="t" style="top:359.00px;font-size:13px;line-height:13px;color:#111;letter-spacing:-0.263px;left:1219.50px;">Melissa</span>
<span class="t" style="top:359.00px;font-size:13px;line-height:13px;color:#0a5c0a;letter-spacing:-0.012px;left:1041.99px;width:600px;text-align:center;">88.30</span>
<span class="t" style="top:384.00px;font-size:13px;line-height:13px;color:#111;letter-spacing:-0.098px;left:1109.00px;">Brickner</span>
<span class="t" style="top:384.00px;font-size:13px;line-height:13px;color:#111;letter-spacing:-0.250px;left:1219.50px;">Amy</span>
<span class="t" style="top:384.00px;font-size:13px;line-height:13px;color:#0a5c0a;letter-spacing:-0.153px;left:1041.92px;width:600px;text-align:center;">153.40</span>
<span class="t" style="top:409.00px;font-size:13px;line-height:13px;color:#111;letter-spacing:-0.102px;left:1109.00px;">Chartrand</span>
<span class="t" style="top:409.00px;font-size:13px;line-height:13px;color:#111;letter-spacing:-0.432px;left:1219.50px;">Kyle</span>
<span class="t" style="top:409.00px;font-size:13px;line-height:13px;color:#0a5c0a;letter-spacing:0.231px;left:1042.12px;width:600px;text-align:center;">111.10</span>
<span class="t" style="top:434.00px;font-size:13px;line-height:13px;color:#111;letter-spacing:-0.241px;left:1109.00px;">Datson</span>
<span class="t" style="top:434.00px;font-size:13px;line-height:13px;color:#111;letter-spacing:-0.284px;left:1219.50px;">Amanda</span>
<span class="t" style="top:430.00px;font-size:11.2px;line-height:11.2px;color:#f5121f;letter-spacing:0.151px;left:1386.00px;">Pay Amanda Datson $561.40 instead of incentive hours.</span>
<span class="t" style="top:459.00px;font-size:13px;line-height:13px;color:#111;letter-spacing:-0.260px;left:1109.00px;">Fulkerson</span>
<span class="t" style="top:459.00px;font-size:13px;line-height:13px;color:#111;letter-spacing:-0.426px;left:1219.50px;">Karen</span>
<span class="t" style="top:459.00px;font-size:13px;line-height:13px;color:#0a5c0a;letter-spacing:-0.153px;left:1041.92px;width:600px;text-align:center;">128.20</span>
<span class="t" style="top:483.00px;font-size:13px;line-height:13px;color:#111;letter-spacing:-0.301px;left:1109.00px;">Glenn</span>
<span class="t" style="top:483.00px;font-size:13px;line-height:13px;color:#111;letter-spacing:0.121px;left:1219.50px;">April</span>
<span class="t" style="top:483.00px;font-size:13px;line-height:13px;color:#0a5c0a;letter-spacing:0.041px;left:1042.02px;width:600px;text-align:center;">116.60</span>
<span class="t" style="top:508.00px;font-size:13px;line-height:13px;color:#111;letter-spacing:-0.591px;left:1109.00px;">Gunness</span>
<span class="t" style="top:508.00px;font-size:13px;line-height:13px;color:#111;letter-spacing:-0.328px;left:1219.50px;">Laurie</span>
<span class="t" style="top:508.00px;font-size:13px;line-height:13px;color:#0a5c0a;letter-spacing:-0.153px;left:1041.92px;width:600px;text-align:center;">106.90</span>
<span class="t" style="top:533.00px;font-size:13px;line-height:13px;color:#111;letter-spacing:0.052px;left:1109.00px;">Holbird</span>
<span class="t" style="top:533.00px;font-size:13px;line-height:13px;color:#111;letter-spacing:-0.285px;left:1219.50px;">Katie</span>
<span class="t" style="top:533.00px;font-size:13px;line-height:13px;color:#0a5c0a;letter-spacing:-0.153px;left:1041.92px;width:600px;text-align:center;">202.40</span>
<span class="t" style="top:558.00px;font-size:13px;line-height:13px;color:#111;letter-spacing:-0.443px;left:1109.00px;">Johnson</span>
<span class="t" style="top:558.00px;font-size:13px;line-height:13px;color:#111;letter-spacing:-0.263px;left:1219.50px;">Cynthia</span>
<span class="t" style="top:558.00px;font-size:13px;line-height:13px;color:#0a5c0a;letter-spacing:-0.012px;left:1041.99px;width:600px;text-align:center;">48.20</span>
<span class="t" style="top:554.00px;font-size:11.2px;line-height:11.2px;color:#f5121f;letter-spacing:0.171px;left:1386.00px;">12.3 of non-bill approved by Bruce Stubbs.</span>
<span class="t" style="top:583.00px;font-size:13px;line-height:13px;color:#111;letter-spacing:-0.316px;left:1109.00px;">Keeler</span>
<span class="t" style="top:583.00px;font-size:13px;line-height:13px;color:#111;letter-spacing:-0.271px;left:1219.50px;">Tina</span>
<span class="t" style="top:583.00px;font-size:13px;line-height:13px;color:#0a5c0a;letter-spacing:-0.153px;left:1041.92px;width:600px;text-align:center;">166.20</span>
<span class="t" style="top:607.00px;font-size:13px;line-height:13px;color:#111;letter-spacing:-0.182px;left:1109.00px;">Largent</span>
<span class="t" style="top:607.00px;font-size:13px;line-height:13px;color:#111;letter-spacing:-0.100px;left:1219.50px;">Lorraine</span>
<span class="t" style="top:607.00px;font-size:13px;line-height:13px;color:#0a5c0a;letter-spacing:-0.104px;left:1041.95px;width:600px;text-align:center;">0.90</span>
<span class="t" style="top:632.00px;font-size:13px;line-height:13px;color:#111;letter-spacing:0.084px;left:1109.00px;">Maldonado</span>
<span class="t" style="top:632.00px;font-size:13px;line-height:13px;color:#111;letter-spacing:0.089px;left:1219.50px;">Marlena</span>
<span class="t" style="top:632.00px;font-size:13px;line-height:13px;color:#0a5c0a;letter-spacing:-0.012px;left:1041.99px;width:600px;text-align:center;">60.70</span>
<span class="t" style="top:657.00px;font-size:13px;line-height:13px;color:#111;letter-spacing:0.143px;left:1109.00px;">Maloney</span>
<span class="t" style="top:657.00px;font-size:13px;line-height:13px;color:#111;letter-spacing:-0.062px;left:1219.50px;">Lori</span>
<span class="t" style="top:657.00px;font-size:13px;line-height:13px;color:#0a5c0a;letter-spacing:-0.104px;left:1041.95px;width:600px;text-align:center;">4.60</span>
<span class="t" style="top:682.00px;font-size:13px;line-height:13px;color:#111;letter-spacing:-0.275px;left:1109.00px;">Oudman</span>
<span class="t" style="top:682.00px;font-size:13px;line-height:13px;color:#111;letter-spacing:-0.141px;left:1219.50px;">Brooke</span>
<span class="t" style="top:682.00px;font-size:13px;line-height:13px;color:#0a5c0a;letter-spacing:-0.012px;left:1041.99px;width:600px;text-align:center;">46.30</span>
<span class="t" style="top:707.00px;font-size:13px;line-height:13px;color:#111;letter-spacing:-0.316px;left:1109.00px;">Rigato</span>
<span class="t" style="top:707.00px;font-size:13px;line-height:13px;color:#111;letter-spacing:-0.534px;left:1219.50px;">Theresa</span>
<span class="t" style="top:707.00px;font-size:13px;line-height:13px;color:#0a5c0a;letter-spacing:-0.153px;left:1041.92px;width:600px;text-align:center;">248.70</span>
<span class="t" style="top:703.00px;font-size:11.2px;line-height:11.2px;color:#f5121f;letter-spacing:0.251px;left:1386.00px;">3.2 hours billed on incorrect file.</span>
<span class="t" style="top:731.00px;font-size:13px;line-height:13px;color:#111;letter-spacing:-0.263px;left:1109.00px;">Santer</span>
<span class="t" style="top:731.00px;font-size:13px;line-height:13px;color:#111;letter-spacing:-0.123px;left:1219.50px;">Patricia</span>
<span class="t" style="top:731.00px;font-size:13px;line-height:13px;color:#0a5c0a;letter-spacing:-0.012px;left:1041.99px;width:600px;text-align:center;">29.40</span>
<span class="t" style="top:728.00px;font-size:11.2px;line-height:11.2px;color:#f5121f;letter-spacing:0.142px;left:1386.00px;">Goal hours were reduced to 120 for Pay 3.</span>
<span class="t" style="top:764.00px;font-size:13px;line-height:13px;color:#111;letter-spacing:-0.263px;left:1109.00px;">Soyluer</span>
<span class="t" style="top:764.00px;font-size:13px;line-height:13px;color:#111;letter-spacing:-0.284px;left:1219.50px;">Nurcan</span>
<span class="t" style="top:764.00px;font-size:13px;line-height:13px;color:#111;letter-spacing:-0.104px;left:1041.95px;width:600px;text-align:center;">0.00</span>
<span class="t" style="top:753.00px;font-size:11.2px;line-height:11.2px;color:#f5121f;letter-spacing:0.307px;left:1386.00px;">Start date 1/26/26. 90 day probationary period, not eligible for</span>
<span class="t" style="top:797.00px;font-size:13px;line-height:13px;color:#111;letter-spacing:-0.031px;left:1109.00px;">Tebedo</span>
<span class="t" style="top:797.00px;font-size:13px;line-height:13px;color:#111;letter-spacing:-0.097px;left:1219.50px;">Meghan</span>
<span class="t" style="top:797.00px;font-size:13px;line-height:13px;color:#0a5c0a;letter-spacing:-0.153px;left:1041.92px;width:600px;text-align:center;">179.90</span>
<span class="t" style="top:822.00px;font-size:13px;line-height:13px;color:#111;letter-spacing:-0.064px;left:1109.00px;">Wurzinger</span>
<span class="t" style="top:822.00px;font-size:13px;line-height:13px;color:#111;letter-spacing:-0.031px;left:1219.50px;">Heidi</span>
<span class="t" style="top:822.00px;font-size:13px;line-height:13px;color:#0a5c0a;letter-spacing:-0.153px;left:1041.92px;width:600px;text-align:center;">125.20</span>
<span class="t" style="top:769.00px;font-size:11.2px;line-height:11.2px;color:#f5121f;letter-spacing:0.263px;left:1386.00px;">incentive pay.</span>
<span class="t" style="top:843.00px;font-size:13px;line-height:13px;color:#0a5c0a;letter-spacing:-0.167px;left:1041.92px;width:600px;text-align:center;">2290.80</span>
<span class="t" style="top:862.00px;font-size:13px;line-height:13px;color:#111;letter-spacing:-0.042px;left:1109.00px;">Print Date:</span>
<span class="t" style="top:862.00px;font-size:13px;line-height:13px;color:#111;letter-spacing:0.395px;left:1219.50px;">3/23/2026</span>
<!-- sec_acro -->
<div style="left:1001px;top:1px;width:918px;height:42px;background:#e6e6e6;"></div>
<div style="left:1001px;top:1px;width:40px;height:42px;background:linear-gradient(90deg,#d4d4d4,#e6e6e6);"></div>
<div style="left:1001px;top:43px;width:918px;height:59px;background:#fff;"></div>
<div style="left:1001px;top:43px;width:40px;height:59px;background:linear-gradient(90deg,#ececec,#fff);"></div>
<div style="left:1001px;top:102px;width:918px;height:1px;background:#d6d6d6;"></div>
<div style="left:1001px;top:103px;width:40px;height:927px;background:linear-gradient(90deg,#dedede,#f4f4f4 65%,#f7f7f7);"></div>
<div style="left:1041px;top:103px;width:1px;height:927px;background:#dcdcdc;"></div>
<div style="left:1818.5px;top:103px;width:41px;height:927px;background:#f7f7f7;border-left:1px solid #d9d9d9;border-right:1px solid #d9d9d9;box-sizing:border-box;"></div>
<div style="left:1847px;top:104px;width:10px;height:424px;background:#c4c4c4;border-radius:5px;"></div>
<svg style="left:1020px;top:15.5px;" width="18" height="15" viewBox="0 0 18 15"><path d="M0.8 1.4H17.2M0.8 7.5H17.2M0.8 13.6H17.2" stroke="#1d1d1d" stroke-width="2" stroke-linecap="round"/></svg>
<span class="t" style="top:16.00px;font-size:14px;line-height:14px;color:#2b2b2b;letter-spacing:-0.344px;left:1048.50px;">Menu</span>
<svg style="left:1113px;top:12px;" width="24" height="21" viewBox="0 0 24 21"><path d="M1.2 10.6L11.6 1.4L22 10.6M4 9V19.4H9.4V13.6H13.8V19.4H19.2V9" fill="none" stroke="#1d1d1d" stroke-width="2.2" stroke-linejoin="round" stroke-linecap="round"/></svg>
<div style="left:1143px;top:9px;width:1px;height:28px;background:#c2c2c2;"></div>
<div style="left:1149px;top:3px;width:262px;height:40px;background:#fff;border-radius:7px 7px 0 0;"></div>
<svg style="left:1163.5px;top:13.5px;" width="21" height="20" viewBox="0 0 21 20"><path d="M10.5 1.6L13.1 7.6L19.6 8.2L14.7 12.5L16.2 18.9L10.5 15.5L4.8 18.9L6.3 12.5L1.4 8.2L7.9 7.6Z" fill="none" stroke="#6e6e6e" stroke-width="2.2" stroke-linejoin="round"/></svg>
<span class="t" style="top:15.00px;font-size:15px;line-height:15px;color:#1c1c1c;letter-spacing:-0.421px;left:1194.00px;">(Pay 3) 01.23.26 - 03.22.2...</span>
<svg style="left:1385.5px;top:17.5px;" width="11" height="11" viewBox="0 0 11 11"><path d="M1.2 1.2L9.8 9.8M9.8 1.2L1.2 9.8" stroke="#595959" stroke-width="1.9"/></svg>
<div style="left:1416px;top:8px;width:85px;height:30px;background:#ebebeb;border:1px solid #b9b9b9;border-radius:6px;box-sizing:border-box;"></div>
<svg style="left:1428px;top:17px;" width="12" height="12" viewBox="0 0 12 12"><path d="M6 0.4V11.6M0.4 6H11.6" stroke="#1d1d1d" stroke-width="1.6"/></svg>
<span class="t" style="top:17.00px;font-size:13.5px;line-height:13.5px;color:#2b2b2b;letter-spacing:-0.506px;left:1453.00px;">Create</span>
<svg style="left:1570px;top:13.5px;" width="19" height="19" viewBox="0 0 19 19"><circle cx="9.5" cy="9.5" r="8.4" fill="none" stroke="#1d1d1d" stroke-width="1.7"/><text x="9.5" y="13.6" text-anchor="middle" font-family="Liberation Sans, sans-serif" font-weight="700" font-size="11" fill="#1d1d1d">?</text></svg>
<svg style="left:1610.5px;top:13px;" width="19" height="21" viewBox="0 0 19 21"><path d="M9.5 1.6A6 6 0 0 1 15.5 7.6V12.4L17.4 15.6H1.6L3.5 12.4V7.6A6 6 0 0 1 9.5 1.6Z" fill="none" stroke="#1d1d1d" stroke-width="1.8" stroke-linejoin="round"/><path d="M7.4 17.4A2.2 2.2 0 0 0 11.6 17.4" fill="none" stroke="#1d1d1d" stroke-width="1.7"/></svg>
<svg style="left:1651px;top:14px;" width="19" height="19" viewBox="0 0 19 19"><rect x="0.9" y="0.9" width="3.4" height="3.4" rx="0.7" fill="none" stroke="#1d1d1d" stroke-width="1.7"/><rect x="7.6000000000000005" y="0.9" width="3.4" height="3.4" rx="0.7" fill="none" stroke="#1d1d1d" stroke-width="1.7"/><rect x="14.3" y="0.9" width="3.4" height="3.4" rx="0.7" fill="none" stroke="#1d1d1d" stroke-width="1.7"/><rect x="0.9" y="7.6000000000000005" width="3.4" height="3.4" rx="0.7" fill="none" stroke="#1d1d1d" stroke-width="1.7"/><rect x="7.6000000000000005" y="7.6000000000000005" width="3.4" height="3.4" rx="0.7" fill="none" stroke="#1d1d1d" stroke-width="1.7"/><rect x="14.3" y="7.6000000000000005" width="3.4" height="3.4" rx="0.7" fill="none" stroke="#1d1d1d" stroke-width="1.7"/><rect x="0.9" y="14.3" width="3.4" height="3.4" rx="0.7" fill="none" stroke="#1d1d1d" stroke-width="1.7"/><rect x="7.6000000000000005" y="14.3" width="3.4" height="3.4" rx="0.7" fill="none" stroke="#1d1d1d" stroke-width="1.7"/><rect x="14.3" y="14.3" width="3.4" height="3.4" rx="0.7" fill="none" stroke="#1d1d1d" stroke-width="1.7"/></svg>
<svg style="left:1689px;top:12px;" width="22" height="22" viewBox="0 0 22 22"><circle cx="11" cy="11" r="10.6" fill="#0a4b57"/><path d="M7.4 5.6H14.6V15H13.6L14 20.4A10.6 10.6 0 0 1 8 20.4L8.4 15H7.4Z" fill="#7fe01f"/><path d="M8 17H14L14.2 21A10.6 10.6 0 0 1 7.8 21Z" fill="#f2e21c"/><circle cx="8.8" cy="7.6" r="1.5" fill="#d9f5d0"/><circle cx="13.2" cy="7.6" r="1.5" fill="#d9f5d0"/><rect x="10.3" y="8.5" width="1.5" height="4" rx="0.7" fill="#0b2a2a"/><path d="M5.2 13.6C3.6 8 6 3.8 10 3.6" fill="none" stroke="#e64a8b" stroke-width="1.2"/><circle cx="5" cy="14.6" r="1.3" fill="#f08cc0"/></svg>
<div style="left:1756px;top:21.3px;width:18px;height:1.6px;background:#111;"></div>
<div style="left:1819.5px;top:14.5px;width:13.5px;height:13.5px;background:transparent;border:1.5px solid #111;box-sizing:border-box;"></div>
<svg style="left:1880px;top:14.5px;" width="13" height="13" viewBox="0 0 13 13"><path d="M0.5 0.5L12.5 12.5M12.5 0.5L0.5 12.5" stroke="#111" stroke-width="1.5"/></svg>
<svg style="left:1028px;top:61px;" width="24" height="24" viewBox="0 0 24 24"><path d="M2.2 9.2L9.4 2.2L11 3.8L3.8 10.8" fill="none" stroke="#1d1d1d" stroke-width="1.7" stroke-linejoin="round"/><path d="M2.6 10.6V19.6A1.4 1.4 0 0 0 4 21H11.4" fill="none" stroke="#1d1d1d" stroke-width="1.8"/><path d="M2.6 11.2H15.4" stroke="#1d1d1d" stroke-width="1.6"/><path d="M9 15.6H12" stroke="#1d1d1d" stroke-width="1.7"/><circle cx="6.6" cy="15.6" r="0.9" fill="#1d1d1d"/><circle cx="12.6" cy="7" r="0.9" fill="#1d1d1d"/><path d="M18.4 1.2L19.4 4.2L22.4 5.2L19.4 6.2L18.4 9.2L17.4 6.2L14.4 5.2L17.4 4.2Z" fill="none" stroke="#1d1d1d" stroke-width="1.2" stroke-linejoin="round"/><path d="M17.6 14.6V23M13.4 18.8H21.8" stroke="#1d1d1d" stroke-width="1.8"/></svg>
<span class="t" style="top:65.00px;font-size:15px;line-height:15px;color:#2b2b2b;letter-spacing:0.221px;left:1060.00px;">Add file to workspace</span>
<div style="left:1237px;top:63px;width:1px;height:20px;background:#cfcfcf;"></div>
<span class="t" style="top:65.00px;font-size:15px;line-height:15px;color:#2b2b2b;letter-spacing:0.309px;left:1266.00px;">All tools</span>
<span class="t" style="top:65.00px;font-size:15px;line-height:15px;color:#2b2b2b;letter-spacing:0.380px;left:1351.00px;">Edit</span>
<span class="t" style="top:65.00px;font-size:15px;line-height:15px;color:#2b2b2b;letter-spacing:0.245px;left:1408.00px;">Convert</span>
<span class="t" style="top:65.00px;font-size:15px;line-height:15px;color:#2b2b2b;letter-spacing:-0.506px;left:1492.00px;">E-Sign</span>
<span class="t" style="top:65.00px;font-size:15px;line-height:15px;color:#2b2b2b;letter-spacing:0.156px;left:1580.00px;">Find text, tools, or help</span>
<svg style="left:1746px;top:62px;" width="23" height="23" viewBox="0 0 23 23"><circle cx="9" cy="9" r="6.8" fill="none" stroke="#1d1d1d" stroke-width="1.9"/><path d="M14 14L20 20" stroke="#1d1d1d" stroke-width="2" stroke-linecap="round"/></svg>
<div style="left:1797.9px;top:69.4px;width:5.2px;height:5.2px;background:#6e6e6e;border-radius:3px;"></div>
<div style="left:1807.2px;top:69.4px;width:5.2px;height:5.2px;background:#6e6e6e;border-radius:3px;"></div>
<div style="left:1816.4px;top:69.4px;width:5.2px;height:5.2px;background:#6e6e6e;border-radius:3px;"></div>
<div style="left:1859.5px;top:103px;width:59.5px;height:927px;background:#fff;"></div>
<svg style="left:1878px;top:123px;" width="24" height="23" viewBox="0 0 24 23"><path d="M13 4.4H3.6A1.6 1.6 0 0 0 2 6V19A1.6 1.6 0 0 0 3.6 20.6H19A1.6 1.6 0 0 0 20.6 19V12" fill="none" stroke="#5258e4" stroke-width="1.8" stroke-linecap="round"/><path d="M5.6 9.2H9.6M5.6 12.8H8M10 12.8H12.4M5.6 16.4H11" stroke="#5258e4" stroke-width="1.7"/><path d="M18.6 0.8L19.7 4.3L23.2 5.4L19.7 6.5L18.6 10L17.5 6.5L14 5.4L17.5 4.3Z" fill="none" stroke="#5258e4" stroke-width="1.2" stroke-linejoin="round"/></svg>
<div style="left:1876px;top:162px;width:29px;height:1px;background:#e1e1e1;"></div>
<svg style="left:1878px;top:179px;" width="23" height="21" viewBox="0 0 23 21"><path d="M12.6 1.4A8 8 0 0 1 20.6 9.4V17.4H12.6A8 8 0 0 1 12.6 1.4Z" fill="none" stroke="#1d1d1d" stroke-width="1.8"/><path d="M9.6 7.6H16M9.6 11.2H16" stroke="#1d1d1d" stroke-width="1.6"/><path d="M3 7.4A8 8 0 0 0 8.6 19.6H15.4" fill="none" stroke="#1d1d1d" stroke-width="1.8"/></svg>
<svg style="left:1878px;top:226px;" width="24" height="24" viewBox="0 0 24 24"><path d="M2 2H12.6V21L7.3 16.6L2 21Z" fill="none" stroke="#1d1d1d" stroke-width="1.9" stroke-linejoin="round"/><path d="M16.4 6.8H22M16.4 10.2H22M16.4 13.6H22" stroke="#1d1d1d" stroke-width="1.3"/></svg>
<svg style="left:1879px;top:275px;" width="22" height="24" viewBox="0 0 22 24"><path d="M8 19.6H4.4A2.4 2.4 0 0 1 2 17.2V4.2A2.4 2.4 0 0 1 4.4 1.8H11.6" fill="none" stroke="#1d1d1d" stroke-width="1.8"/><path d="M7.6 6.4H14.6L19.8 11.6V20.4A1.8 1.8 0 0 1 18 22.2H9.4A1.8 1.8 0 0 1 7.6 20.4Z" fill="#fff" stroke="#1d1d1d" stroke-width="1.8" stroke-linejoin="round"/><path d="M14.2 6.6V12H19.6" fill="none" stroke="#1d1d1d" stroke-width="1.6"/></svg>
<div style="left:1794px;top:485px;width:50px;height:369px;background:#fff;border:1px solid #c2c2c2;border-radius:6px;box-sizing:border-box;"></div>
<div style="left:1800px;top:491.5px;width:40px;height:4.5px;background:#c6c6c6;border-radius:2.5px;"></div>
<div style="left:1799px;top:507px;width:40px;height:40px;background:#1267d6;border-radius:4px;"></div>
<svg style="left:1811px;top:516px;" width="15" height="21" viewBox="0 0 15 21"><path d="M1.4 1.2V16L5.2 12.6L8 19.6L10.8 18.4L8 11.6L13 11.4Z" fill="#fff"/></svg>
<svg style="left:1828px;top:535px;" width="6" height="6" viewBox="0 0 6 6"><path d="M6 0V6H0Z" fill="#fff"/></svg>
<svg style="left:1807px;top:565px;" width="24" height="24" viewBox="0 0 24 24"><path d="M11 2A9 9 0 0 1 20 11V20H11A9 9 0 0 1 11 2Z" fill="none" stroke="#1d1d1d" stroke-width="1.9"/><path d="M6.6 9H15.2M6.6 13H13" stroke="#1d1d1d" stroke-width="1.7"/></svg>
<svg style="left:1828px;top:585px;" width="6" height="6" viewBox="0 0 6 6"><path d="M6 0V6H0Z" fill="#1d1d1d"/></svg>
<svg style="left:1806px;top:614px;" width="26" height="24" viewBox="0 0 26 24"><path d="M7 14.6L18 2.6A1.4 1.4 0 0 1 20 2.4L22.4 4.6A1.4 1.4 0 0 1 22.6 6.6L11.8 18.4Z" fill="none" stroke="#1d1d1d" stroke-width="1.8" stroke-linejoin="round"/><path d="M7.4 14.2L2 20.4H8.2L11.8 18.6Z" fill="#1d1d1d"/><path d="M9 21H20L22.6 17H12Z" fill="#b9b9b9"/></svg>
<svg style="left:1828px;top:635px;" width="6" height="6" viewBox="0 0 6 6"><path d="M6 0V6H0Z" fill="#1d1d1d"/></svg>
<svg style="left:1807px;top:667px;" width="24" height="20" viewBox="0 0 24 20"><path d="M12.8 12.6C16.6 12.4 20.8 10.6 20.8 7.4C20.8 4.2 16.8 2.4 12.4 2.4C6.8 2.4 2.4 5.6 2.4 9.6C2.4 13.6 6.4 16.2 10.8 15.4" fill="none" stroke="#1d1d1d" stroke-width="2.1" stroke-linecap="round"/></svg>
<svg style="left:1828px;top:685px;" width="6" height="6" viewBox="0 0 6 6"><path d="M6 0V6H0Z" fill="#1d1d1d"/></svg>
<svg style="left:1807px;top:715px;" width="24" height="24" viewBox="0 0 24 24"><rect x="1.2" y="1.2" width="21" height="21" fill="none" stroke="#1d1d1d" stroke-width="1.9" stroke-dasharray="3.2 1.6"/><text x="11.7" y="17.4" text-anchor="middle" font-family="Liberation Sans, sans-serif" font-weight="700" font-size="14.5" fill="#1d1d1d">A</text></svg>
<svg style="left:1828px;top:735px;" width="6" height="6" viewBox="0 0 6 6"><path d="M6 0V6H0Z" fill="#1d1d1d"/></svg>
<svg style="left:1806px;top:765px;" width="26" height="24" viewBox="0 0 26 24"><path d="M2.4 19.4L4.8 9.6L13.4 2L20 9L11.4 17.2Z" fill="none" stroke="#1d1d1d" stroke-width="1.9" stroke-linejoin="round"/><path d="M11 10.6L4 18.4" stroke="#1d1d1d" stroke-width="1.6"/><circle cx="11.4" cy="10.2" r="1.5" fill="#1d1d1d"/><path d="M14.6 19.4C16 16.6 17.6 16.4 18 18.4C18.4 20.4 20 19.6 21.4 17.8" fill="none" stroke="#1d1d1d" stroke-width="1.4"/></svg>
<svg style="left:1828px;top:785px;" width="6" height="6" viewBox="0 0 6 6"><path d="M6 0V6H0Z" fill="#1d1d1d"/></svg>
<div style="left:1811.2px;top:826.4px;width:2.2px;height:2.2px;background:#1d1d1d;border-radius:1.1px;"></div>
<div style="left:1818.2px;top:826.4px;width:2.2px;height:2.2px;background:#1d1d1d;border-radius:1.1px;"></div>
<div style="left:1825.2px;top:826.4px;width:2.2px;height:2.2px;background:#1d1d1d;border-radius:1.1px;"></div>
<div style="left:1869.5px;top:667px;width:39.5px;height:39.5px;background:#fff;border:1px solid #c9c9c9;border-radius:5px;box-sizing:border-box;"></div>
<span class="t" style="top:679.00px;font-size:14px;line-height:14px;color:#222;left:1589.00px;width:600px;text-align:center;">1</span>
<span class="t" style="top:724.00px;font-size:14px;line-height:14px;color:#222;left:1590.00px;width:600px;text-align:center;">2</span>
<svg style="left:1884px;top:774.5px;" width="12" height="8" viewBox="0 0 12 8"><path d="M1 7L6 2L11 7" fill="none" stroke="#9a9a9a" stroke-width="2"/></svg>
<svg style="left:1884px;top:818.5px;" width="12" height="8" viewBox="0 0 12 8"><path d="M1 1L6 6L11 1" fill="none" stroke="#1d1d1d" stroke-width="2.2"/></svg>
<div style="left:1869px;top:845px;width:41px;height:1px;background:#e1e1e1;"></div>
<svg style="left:1880px;top:859px;" width="24" height="24" viewBox="0 0 24 24"><path d="M20 12.4A8.6 8.6 0 1 1 16.8 5.4" fill="none" stroke="#1d1d1d" stroke-width="2.2"/><path d="M20 1.8V8H13.8" fill="none" stroke="#1d1d1d" stroke-width="2.2"/></svg>
<svg style="left:1881.5px;top:903.5px;" width="24" height="28" viewBox="0 0 24 28"><path d="M3.4 2H11.6L17.4 7.8V19.6A2.4 2.4 0 0 1 15 22H3.4A2.4 2.4 0 0 1 1 19.6V4.4A2.4 2.4 0 0 1 3.4 2Z" fill="none" stroke="#1d1d1d" stroke-width="1.9" stroke-linejoin="round"/><path d="M11 2.4V8.4H17" fill="none" stroke="#1d1d1d" stroke-width="1.7"/><text x="9.2" y="18.2" text-anchor="middle" letter-spacing="-0.6" font-family="Liberation Sans, sans-serif" font-weight="700" font-size="9.4" fill="#1d1d1d">1:1</text><path d="M24 20V26H18Z" fill="#1d1d1d"/></svg>
<svg style="left:1881px;top:951.5px;" width="24" height="24" viewBox="0 0 24 24"><circle cx="8.8" cy="8.8" r="7" fill="none" stroke="#1d1d1d" stroke-width="2.1"/><path d="M14.2 14.2L20 20" stroke="#1d1d1d" stroke-width="2.3" stroke-linecap="round"/><path d="M5.4 8.8H12.2M8.8 5.4V12.2" stroke="#1d1d1d" stroke-width="1.9"/></svg>
<svg style="left:1881px;top:997.5px;" width="24" height="24" viewBox="0 0 24 24"><circle cx="8.8" cy="8.8" r="7" fill="none" stroke="#1d1d1d" stroke-width="2.1"/><path d="M14.2 14.2L20 20" stroke="#1d1d1d" stroke-width="2.3" stroke-linecap="round"/><path d="M5.4 8.8H12.2" stroke="#1d1d1d" stroke-width="1.9"/></svg>
<!-- sec_task -->
<div style="left:0px;top:0px;width:1920px;height:1px;background:#6f6f6f;"></div>
<div style="left:0px;top:0px;width:1px;height:1032px;background:#6b6b6b;"></div>
<div style="left:999px;top:1px;width:2px;height:1030px;background:#777;"></div>
<div style="left:1919px;top:1px;width:1px;height:1030px;background:#6e6e6e;"></div>
<div style="left:0px;top:1030.6px;width:1920px;height:1.4px;background:#727272;"></div>
<div style="left:0px;top:1032px;width:1920px;height:48px;background:#eeeeee;"></div>
<svg style="left:19px;top:1047px;" width="26" height="20" viewBox="0 0 26 20"><circle cx="17" cy="8" r="5.4" fill="#f4b63f"/><path d="M6 18.6A4.6 4.6 0 0 1 6.4 9.4A6.4 6.4 0 0 1 18.4 9.8A4.4 4.4 0 0 1 18.6 18.6Z" fill="#dfe7f6" stroke="#a9bfe8" stroke-width="0.9"/></svg>
<div style="left:30px;top:1038px;width:16.5px;height:16.5px;background:#c42b1c;border-radius:9px;"></div>
<span class="t" style="top:1042.00px;font-size:11.5px;line-height:11.5px;color:#fff;left:-261.70px;width:600px;text-align:center;">1</span>
<span class="t" style="top:1042.00px;font-size:12px;line-height:12px;color:#1b1b1b;letter-spacing:-0.495px;left:50.00px;">35°F</span>
<span class="t" style="top:1058.00px;font-size:12px;line-height:12px;color:#5f5f5f;letter-spacing:0.233px;left:50.00px;">Mostly cloudy</span>
<svg style="left:551px;top:1045px;" width="24" height="24" viewBox="0 0 24 24"><defs><linearGradient id="wg" x1="0" y1="0" x2="1" y2="1"><stop offset="0" stop-color="#55c8fb"/><stop offset="1" stop-color="#0a6fd0"/></linearGradient></defs><g fill="url(#wg)"><rect x="0" y="0" width="11" height="11" rx="0.6"/><rect x="12.2" y="0" width="11" height="11" rx="0.6"/><rect x="0" y="12.2" width="11" height="11" rx="0.6"/><rect x="12.2" y="12.2" width="11" height="11" rx="0.6"/></g></svg>
<div style="left:588px;top:1040.5px;width:218px;height:31px;background:#fafafa;border:1px solid #dedede;border-radius:16px;box-sizing:border-box;"></div>
<svg style="left:598px;top:1049px;" width="16" height="16" viewBox="0 0 16 16"><circle cx="6.4" cy="6.4" r="5.2" fill="none" stroke="#222" stroke-width="1.6"/><path d="M10.2 10.2L14.6 14.6" stroke="#222" stroke-width="1.8" stroke-linecap="round"/></svg>
<span class="t" style="top:1049.00px;font-size:14px;line-height:14px;color:#5a5a5a;letter-spacing:-0.672px;left:624.00px;">Search</span>
<svg style="left:819px;top:1044px;" width="25" height="24" viewBox="0 0 25 24"><defs><linearGradient id="tv" x1="0" y1="1" x2="1" y2="0"><stop offset="0" stop-color="#1a1a1a"/><stop offset="0.45" stop-color="#3a3a3a"/><stop offset="1" stop-color="#d2d2d2"/></linearGradient></defs><rect x="5.8" y="0.8" width="17.8" height="16" rx="1.6" fill="#fbfbfb" stroke="#e4e4e4" stroke-width="0.7"/><rect x="0.3" y="6.7" width="18" height="16" rx="1.8" fill="url(#tv)"/></svg>
<svg style="left:863px;top:1044px;" width="25" height="24" viewBox="0 0 25 24"><path d="M1 3.4A1.4 1.4 0 0 1 2.4 2H8.6L11 4.4H22.6A1.4 1.4 0 0 1 24 5.8V9H1Z" fill="#e9a520"/><rect x="1" y="6.6" width="23" height="15.6" rx="1.6" fill="#fcd354"/><path d="M1 16H24V20.6A1.6 1.6 0 0 1 22.4 22.2H2.6A1.6 1.6 0 0 1 1 20.6Z" fill="#1c7cd6"/><rect x="8" y="17.4" width="9" height="2.6" rx="1.3" fill="#0b5cad"/></svg>
<div style="left:871.7px;top:1072.2px;width:6.6px;height:3px;background:#808080;border-radius:1.5px;"></div>
<svg style="left:907px;top:1044px;" width="25" height="25" viewBox="0 0 25 25"><defs><linearGradient id="eg" x1="0" y1="0" x2="1" y2="1"><stop offset="0" stop-color="#35c1f1"/><stop offset="0.5" stop-color="#1b9de2"/><stop offset="1" stop-color="#0c59a4"/></linearGradient><linearGradient id="eg2" x1="0" y1="0" x2="1" y2="0"><stop offset="0" stop-color="#2bb8d6"/><stop offset="1" stop-color="#6be56a"/></linearGradient></defs><circle cx="12.5" cy="12.5" r="12" fill="url(#eg)"/><path d="M1 10A12 12 0 0 1 24.4 11C24.6 14.6 22 16.4 19 16.4C16 16.4 15.4 14.6 16 13.4C16.6 12 15.4 8.4 11.4 8.4C6.4 8.4 2 11 1 10Z" fill="url(#eg2)"/><path d="M16 13.4C15.2 14.8 16.4 16.6 19 16.6C20.4 16.6 22.2 16 23.2 15C21.6 19.6 17.6 21.6 14 20.4C10.6 19.2 9.6 15.6 11 13.2C11.8 11.8 14 11.4 15.4 12C16 12.4 16.2 12.8 16 13.4Z" fill="#eef6fb"/><rect x="2" y="15" width="10.4" height="8" rx="1.2" fill="#a86b2d"/><rect x="5.2" y="13.4" width="4" height="2.4" rx="0.8" fill="none" stroke="#8a5522" stroke-width="1"/><rect x="2" y="17.6" width="10.4" height="1.6" fill="#e5a73e"/></svg>
<div style="left:915.7px;top:1072.2px;width:6.6px;height:3px;background:#808080;border-radius:1.5px;"></div>
<div style="left:943px;top:1036px;width:40px;height:39px;background:#eeb3b1;border-radius:5px;"></div>
<div style="left:947px;top:1072px;width:32px;height:2.6px;background:#c42b1c;border-radius:1.3px;"></div>
<svg style="left:950px;top:1045px;" width="26" height="23" viewBox="0 0 26 23"><circle cx="17.4" cy="5.4" r="3.6" fill="#7b83eb"/><circle cx="10" cy="4.4" r="3" fill="#5059c9"/><path d="M10 8.6H22.6A1.8 1.8 0 0 1 24.4 10.4V16A6.4 6.4 0 0 1 11.6 16Z" fill="#7b83eb"/><path d="M2 9.4H13V17A5.5 5.5 0 0 1 2 17Z" fill="#5059c9"/><rect x="1" y="9" width="10.6" height="10.6" rx="1.4" fill="#4b53bc"/><path d="M3.6 11.8H9M6.3 11.8V17.4" stroke="#fff" stroke-width="1.5"/></svg>
<div style="left:963px;top:1038px;width:16px;height:16px;background:#c42b1c;border-radius:8px;"></div>
<span class="t" style="top:1041.00px;font-size:11.5px;line-height:11.5px;color:#fff;left:671.00px;width:600px;text-align:center;">1</span>
<svg style="left:995px;top:1044px;" width="26" height="26" viewBox="0 0 26 26"><path d="M2.6 2L15.6 0.6L17.6 15.2L5 17.4Z" fill="#1a3bbf"/><path d="M4.4 3.8L14.2 2.6L15.8 13.8L6.2 15.4Z" fill="#3d7ef2"/><path d="M7 17L8 21L4.4 22.6L13.6 22.2L11.6 20.4L11.4 16.4Z" fill="#9aa3ad"/><circle cx="18.4" cy="17.8" r="5.6" fill="#8f979e" stroke="#e9e9e9" stroke-width="1"/><path d="M15.6 16.4L17.6 18L15.6 19.6M21.2 15.8L19.2 17.4L21.2 19" fill="none" stroke="#3ccf5a" stroke-width="1.4"/></svg>
<svg style="left:1038.5px;top:1044px;" width="24" height="24" viewBox="0 0 24 24"><circle cx="12" cy="12" r="10.8" fill="#fff" stroke="#1368d4" stroke-width="2.1"/><path d="M18 8.4A6.8 6.8 0 1 0 18 15.6" fill="none" stroke="#1368d4" stroke-width="3"/><path d="M1.4 12H6" stroke="#1368d4" stroke-width="1.4"/></svg>
<div style="left:1076px;top:1036px;width:37px;height:39px;background:#fafafa;border-radius:5px;box-shadow:1px 0 0 #e3e3e3;"></div>
<div style="left:1087px;top:1072px;width:15.5px;height:2.6px;background:#1a73e8;border-radius:1.3px;"></div>
<svg style="left:1082.5px;top:1044px;" width="24" height="24" viewBox="0 0 24 24"><circle cx="12" cy="12" r="11.6" fill="#fff"/><path d="M12 0.4A11.6 11.6 0 0 1 22 6.2H12A5.8 5.8 0 0 0 7 9.1L2 3.4A11.6 11.6 0 0 1 12 0.4Z" fill="#e33b2e"/><path d="M22 6.2A11.6 11.6 0 0 1 11.2 23.6L16.6 14.8A5.8 5.8 0 0 0 17 9.1L12 6.2Z" fill="#fcc934"/><path d="M2 3.4L7 12A5.8 5.8 0 0 0 16.6 14.8L11.2 23.6A11.6 11.6 0 0 1 2 3.4Z" fill="#1ea446"/><circle cx="12" cy="12" r="5.3" fill="#fff"/><circle cx="12" cy="12" r="4.2" fill="#1a73e8"/></svg>
<svg style="left:1126px;top:1039px;" width="32" height="30" viewBox="0 0 32 30"><path d="M6 12L15.4 6.4L24.4 11.6V23A2.4 2.4 0 0 1 22 25.4H8.4A2.4 2.4 0 0 1 6 23Z" fill="#2f9fe8"/><path d="M6 13.4L24.4 25A2.4 2.4 0 0 1 22 25.4H8.4A2.4 2.4 0 0 1 6 23Z" fill="#5cc4f8"/><path d="M24.4 13.4L9 25.4H22A2.4 2.4 0 0 0 24.4 23Z" fill="#1d86d8"/><rect x="1.2" y="15.4" width="10.6" height="10.6" rx="1.8" fill="#0f6cbd"/><circle cx="6.5" cy="20.7" r="2.7" fill="none" stroke="#fff" stroke-width="1.5"/><circle cx="22.4" cy="7.4" r="7.4" fill="#4cc9f5"/><rect x="18" y="4.4" width="8.8" height="6.2" rx="1" fill="none" stroke="#0b1f33" stroke-width="1.1"/><path d="M18.2 4.8L22.4 8L26.6 4.8" fill="none" stroke="#0b1f33" stroke-width="1.1"/></svg>
<div style="left:1135.2px;top:1072.2px;width:6.6px;height:3px;background:#808080;border-radius:1.5px;"></div>
<svg style="left:1170px;top:1044px;" width="24" height="24" viewBox="0 0 24 24"><rect x="5" y="0.6" width="18" height="22" rx="2.6" fill="#ca64ea"/><path d="M5 0.6H15V12H5Z" fill="#e9a9f8" opacity="0.55"/><path d="M14 8H23V20A2.6 2.6 0 0 1 20.4 22.6H14Z" fill="#9a38c8"/><rect x="0.6" y="10.4" width="11.6" height="11.6" rx="1.6" fill="#7719aa"/><path d="M4 19V13.4L8.8 19V13.4" fill="none" stroke="#fff" stroke-width="1.5"/></svg>
<div style="left:1179.2px;top:1072.2px;width:6.6px;height:3px;background:#808080;border-radius:1.5px;"></div>
<svg style="left:1216px;top:1045px;" width="21" height="21" viewBox="0 0 21 21"><rect x="0.4" y="0.4" width="20.2" height="20.2" rx="5" fill="#3a0e88"/><circle cx="10" cy="10.4" r="4.8" fill="none" stroke="#fff" stroke-width="2.4"/><path d="M11.6 12.4L15.6 16.8" stroke="#fff" stroke-width="2.4"/><circle cx="5" cy="4.4" r="0.8" fill="#d9b8ff"/><circle cx="16.4" cy="5" r="0.8" fill="#d9b8ff"/></svg>
<div style="left:1223.2px;top:1072.2px;width:6.6px;height:3px;background:#808080;border-radius:1.5px;"></div>
<svg style="left:1258.5px;top:1044px;" width="24" height="24" viewBox="0 0 24 24"><rect x="5" y="0.6" width="18" height="22" rx="2.6" fill="#21a366"/><path d="M14 0.6H20.4A2.6 2.6 0 0 1 23 3.2V11H14Z" fill="#33c481"/><path d="M5 11H14V22.6H7.6A2.6 2.6 0 0 1 5 20Z" fill="#107c41"/><path d="M14 11H23V20A2.6 2.6 0 0 1 20.4 22.6H14Z" fill="#185c37"/><rect x="0.6" y="10.4" width="11.6" height="11.6" rx="1.6" fill="#107c41"/><path d="M3.8 13.2L9 19.4M9 13.2L3.8 19.4" stroke="#fff" stroke-width="1.6"/></svg>
<div style="left:1267.2px;top:1072.2px;width:6.6px;height:3px;background:#808080;border-radius:1.5px;"></div>
<svg style="left:1305px;top:1043.5px;" width="19" height="25" viewBox="0 0 19 25"><rect x="0.5" y="0.5" width="18" height="24" rx="1.8" fill="#6b7685"/><rect x="2.4" y="2.4" width="14.2" height="5" fill="#58c5ee"/><g fill="#dfe3e8"><rect x="2.4" y="9.4" width="4" height="3.8"/><rect x="7.5" y="9.4" width="4" height="3.8"/><rect x="12.6" y="9.4" width="4" height="3.8"/><rect x="2.4" y="14.2" width="4" height="3.8"/><rect x="7.5" y="14.2" width="4" height="3.8"/><rect x="2.4" y="19" width="4" height="3.8"/><rect x="7.5" y="19" width="4" height="3.8"/></g><rect x="12.6" y="14.2" width="4" height="8.6" fill="#1c5fa8"/></svg>
<div style="left:1311.2px;top:1072.2px;width:6.6px;height:3px;background:#808080;border-radius:1.5px;"></div>
<svg style="left:1348px;top:1045px;" width="22" height="22" viewBox="0 0 22 22"><rect x="0.3" y="0.3" width="21.4" height="21.4" rx="4" fill="#b30b00"/><path d="M5 16.6C7.6 15 9.8 11 10.6 6.6C10.9 4.8 9.6 4.4 9.5 6C9.4 9 13 13.4 16.4 13.8C18.2 14 18.2 12.6 16.4 12.6C12.6 12.6 7.4 14.6 5 16.6Z" fill="none" stroke="#fff" stroke-width="1.4" stroke-linejoin="round"/></svg>
<div style="left:1355.2px;top:1072.2px;width:6.6px;height:3px;background:#808080;border-radius:1.5px;"></div>
<svg style="left:1699.5px;top:1051px;" width="12" height="8" viewBox="0 0 12 8"><path d="M1 7L6 2L11 7" fill="none" stroke="#1b1b1b" stroke-width="1.4"/></svg>
<svg style="left:1730px;top:1047px;" width="14" height="18" viewBox="0 0 14 18"><rect x="4.4" y="0.8" width="5.2" height="10" rx="2.6" fill="none" stroke="#1857b8" stroke-width="1.3"/><path d="M1.6 8.6A5.4 5.4 0 0 0 12.4 8.6M7 14V16.6" fill="none" stroke="#1857b8" stroke-width="1.3"/></svg>
<svg style="left:1760px;top:1048px;" width="18" height="14" viewBox="0 0 18 14"><g fill="none" stroke="#1b1b1b" stroke-width="1.2"><path d="M1 5A11.4 11.4 0 0 1 17 5"/><path d="M3.6 7.8A7.6 7.6 0 0 1 14.4 7.8"/><path d="M6.2 10.4A4 4 0 0 1 11.8 10.4"/></g><circle cx="9" cy="12.4" r="1.1" fill="#1b1b1b"/></svg>
<svg style="left:1784px;top:1048px;" width="18" height="14" viewBox="0 0 18 14"><path d="M1 5H3.6L7.4 1.6V12.4L3.6 9H1Z" fill="none" stroke="#1b1b1b" stroke-width="1.2" stroke-linejoin="round"/><g fill="none" stroke="#1b1b1b" stroke-width="1.1"><path d="M9.6 4.8A3.2 3.2 0 0 1 9.6 9.2"/><path d="M11.6 2.8A6 6 0 0 1 11.6 11.2"/><path d="M13.6 0.9A8.8 8.8 0 0 1 13.6 13.1"/></g></svg>
<svg style="left:1808px;top:1048px;" width="22" height="14" viewBox="0 0 22 14"><rect x="0.8" y="3.4" width="18" height="9.4" rx="2.2" fill="#fff" stroke="#1b1b1b" stroke-width="1.1"/><rect x="2.2" y="4.8" width="15.2" height="6.6" rx="1.2" fill="#107c10"/><path d="M19.6 6.4V9.8" stroke="#1b1b1b" stroke-width="1.6" stroke-linecap="round"/><path d="M10.8 0.2L7.6 6H10L8.6 10L12.8 4.6H10.2Z" fill="#1b1b1b" stroke="#eee" stroke-width="0.5"/></svg>
<span class="t" style="top:1042.00px;font-size:12px;line-height:12px;color:#1b1b1b;letter-spacing:0.098px;right:19.40px;">11:28 AM</span>
<span class="t" style="top:1058.00px;font-size:12px;line-height:12px;color:#1b1b1b;letter-spacing:0.201px;right:19.30px;">3/24/2026</span>
</div></body></html>
